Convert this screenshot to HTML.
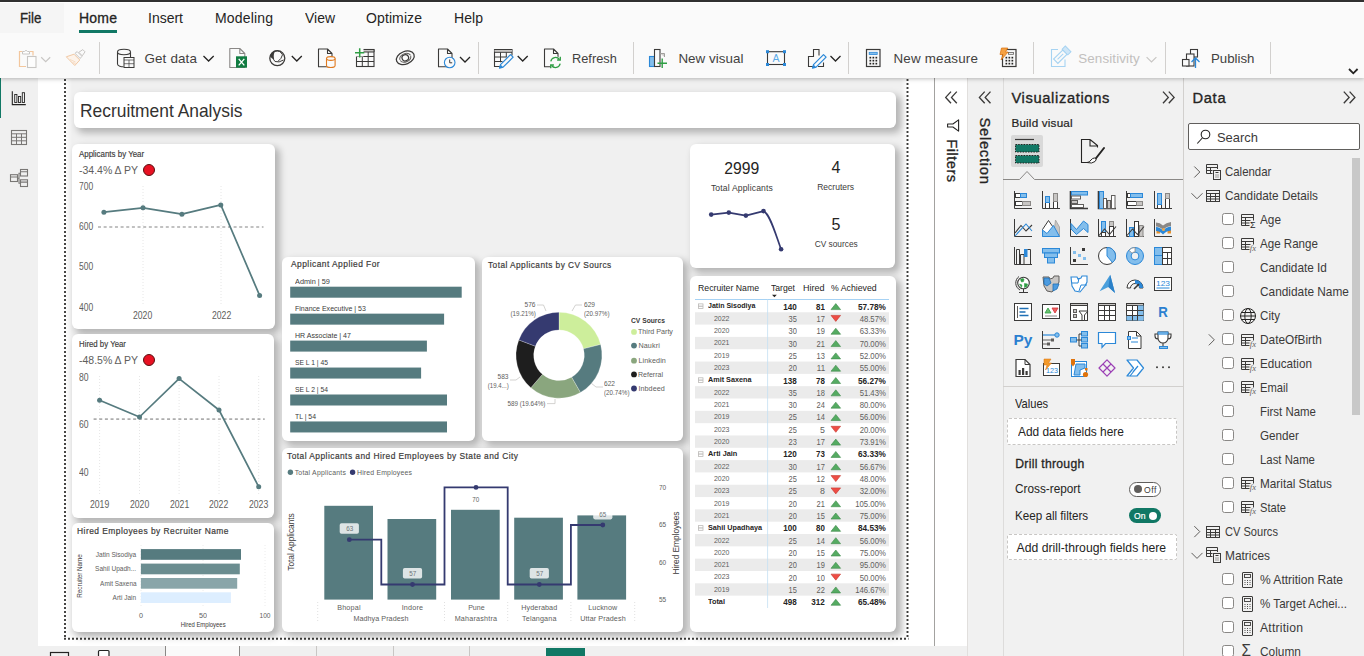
<!DOCTYPE html>
<html lang="en"><head><meta charset="utf-8"><title>Recruitment Analysis - Power BI Desktop</title>
<style>
*{box-sizing:border-box;margin:0;padding:0}
html,body{width:1364px;height:656px;overflow:hidden;background:#fff}
body{position:relative;font-family:"Liberation Sans",sans-serif;color:#252423}
.b{position:absolute;display:block}
.t{position:absolute;white-space:nowrap;display:block}
.g{position:absolute;left:0;top:0;width:0;height:0}
.card{position:absolute;background:#fff;border-radius:6px;box-shadow:4px 4px 7px 1px rgba(0,0,0,.25)}
svg{overflow:visible}
</style></head>
<body>
<div class="b" style="left:0.00px;top:0.00px;width:1364.00px;height:2.00px;background:#333333;"></div>
<header class="g" id="ribbon">
<div class="b" style="left:0.00px;top:2.00px;width:1364.00px;height:76.00px;background:#fafafa;box-shadow:0 1px 4px rgba(0,0,0,.25);z-index:5;border-top:1px solid #fff"></div>
<nav class="g" style="z-index:6">
<div class="b" style="left:0.00px;top:3.00px;width:64.00px;height:30.00px;background:#f5f5f5;"></div>
<span class="t" style="left:20.40px;top:10.00px;font-size:14.00px;line-height:17px;color:#252423;transform:scaleX(0.9486);transform-origin:0 50%;-webkit-text-stroke:0.30px #252423;">File</span>
<span class="t" style="left:79.00px;top:10.00px;font-size:14.00px;line-height:17px;color:#252423;letter-spacing:0.218px;-webkit-text-stroke:0.30px #252423;">Home</span>
<span class="t" style="left:148.00px;top:10.00px;font-size:14.00px;line-height:17px;color:#252423;transform:scaleX(0.9996);transform-origin:0 50%;">Insert</span>
<span class="t" style="left:215.00px;top:10.00px;font-size:14.00px;line-height:17px;color:#252423;letter-spacing:0.169px;">Modeling</span>
<span class="t" style="left:305.00px;top:10.00px;font-size:14.00px;line-height:17px;color:#252423;transform:scaleX(0.9969);transform-origin:0 50%;">View</span>
<span class="t" style="left:366.00px;top:10.00px;font-size:14.00px;line-height:17px;color:#252423;letter-spacing:0.109px;">Optimize</span>
<span class="t" style="left:454.00px;top:10.00px;font-size:14.00px;line-height:17px;color:#252423;letter-spacing:0.069px;">Help</span>
<div class="b" style="left:79.00px;top:30.00px;width:38.00px;height:3.00px;background:#117865;"></div>
</nav>
<div class="g" id="ribbon-items" style="z-index:6">
<div class="b" style="left:99.00px;top:42.00px;width:1.00px;height:32.00px;background:#d2d0ce;"></div>
<div class="b" style="left:478.00px;top:42.00px;width:1.00px;height:32.00px;background:#d2d0ce;"></div>
<div class="b" style="left:632.50px;top:42.00px;width:1.00px;height:32.00px;background:#d2d0ce;"></div>
<div class="b" style="left:848.00px;top:42.00px;width:1.00px;height:32.00px;background:#d2d0ce;"></div>
<div class="b" style="left:1033.00px;top:42.00px;width:1.00px;height:32.00px;background:#d2d0ce;"></div>
<div class="b" style="left:1165.00px;top:42.00px;width:1.00px;height:32.00px;background:#d2d0ce;"></div>
<div class="b" style="left:1270.00px;top:42.00px;width:1.00px;height:32.00px;background:#d2d0ce;"></div>
<span class="t" style="left:144.40px;top:51.00px;font-size:13.40px;line-height:16px;color:#424140;letter-spacing:0.171px;">Get data</span>
<span class="t" style="left:571.70px;top:51.00px;font-size:13.40px;line-height:16px;color:#424140;transform:scaleX(0.9548);transform-origin:0 50%;">Refresh</span>
<span class="t" style="left:678.40px;top:51.00px;font-size:13.40px;line-height:16px;color:#424140;letter-spacing:0.034px;">New visual</span>
<span class="t" style="left:893.50px;top:51.00px;font-size:13.40px;line-height:16px;color:#424140;letter-spacing:0.183px;">New measure</span>
<span class="t" style="left:1078.20px;top:51.00px;font-size:13.40px;line-height:16px;color:#c2c0be;letter-spacing:0.128px;">Sensitivity</span>
<span class="t" style="left:1210.60px;top:51.00px;font-size:13.40px;line-height:16px;color:#424140;transform:scaleX(0.9897);transform-origin:0 50%;">Publish</span>
<svg class="b" style="left:0.00px;top:0.00px;" width="1364" height="656" viewBox="0 0 1364 656"><path d="M26 66.500h-6.500v-15h3M30 51.500h3v4" fill="none" stroke="#f3c79d" stroke-width="1.200"/><path d="M22.500 54v-2.500h2q1.500-2.500 3 0h2V54z" fill="#fff" stroke="#c8c6c4" stroke-width="1"/><rect x="27.500" y="56.500" width="8.500" height="11" fill="#fdfdfd" stroke="#c8c6c4" stroke-width="1.100"/><path d="M41.2 57.25l4.5 4.5l4.5 -4.5" fill="none" stroke="#c8c6c4" stroke-width="1.2"/><path d="M66.300 56.800l7.700-2.600 5.800 5.800-5 5.500z" fill="#fdf3ea" stroke="#f1c9a5" stroke-width="1" stroke-linejoin="round"/><path d="M70 59.500l5.500 2.500M72.500 62.500l3 1" stroke="#f6dcc4" stroke-width="1"/><path d="M75 53.300l2.200-1.700 4.700 4.700-1.700 2.200z" fill="#fafafa" stroke="#c8c6c4" stroke-width="1" stroke-linejoin="round"/><path d="M78.800 52.300l4-2.700 2.200 2.200-2.700 4z" fill="#fafafa" stroke="#c8c6c4" stroke-width="1" stroke-linejoin="round"/><path d="M117.500 52v12c0 2 4 2.800 6 2.800M130.500 52v5" fill="none" stroke="#3b3a39" stroke-width="1.100"/><ellipse cx="124" cy="52" rx="6.500" ry="2.700" fill="#fafafa" stroke="#3b3a39" stroke-width="1.100"/><rect x="124" y="57.500" width="10" height="10" fill="#fafafa" stroke="#3b3a39" stroke-width="1"/><path d="M124 60h10M124 63.700h10M129 60v7.500" stroke="#3b3a39" stroke-width="0.700" fill="none"/><path d="M203.5 55.95l5.1 5.1l5.1 -5.1" fill="none" stroke="#252423" stroke-width="1.3"/><path d="M229.8 48.5h10l5 5v14h-15z M239.8 48.5v5h5" fill="none" stroke="#8a8886" stroke-width="1.1" stroke-linejoin="round"/><rect x="236" y="56.300" width="11" height="11.400" fill="#107c41"/><path d="M238.700 58.800l5.600 6.600M244.300 58.800l-5.600 6.600" stroke="#fff" stroke-width="1.300"/><circle cx="277.300" cy="58.200" r="7.500" fill="#fafafa" stroke="#3b3a39" stroke-width="1.300"/><path d="M273.500 52q-2.500 5 1.500 9.500 4 1.500 8.500-1.500M275 51.300q5-1.500 7.500 3.500-1 4-4.500 6.500" fill="none" stroke="#3b3a39" stroke-width="1"/><path d="M270.200 56q1-4.500 5.500-5.500-3 4-1.500 9-3-.5-4-3.500z" fill="#3b3a39"/><path d="M291.8 56l5 5l5 -5" fill="none" stroke="#252423" stroke-width="1.3"/><path d="M318.5 49h9l4.5 4.5v13.3h-13.5z M327.5 49v4.5h4.5" fill="none" stroke="#3b3a39" stroke-width="1.1" stroke-linejoin="round"/><path d="M326.500 58.500v7c0 1.200 2 2 4.300 2s4.300-.8 4.300-2v-7" fill="#fafafa" stroke="#e07a1f" stroke-width="1.100"/><ellipse cx="330.800" cy="58.500" rx="4.300" ry="1.900" fill="#fafafa" stroke="#e07a1f" stroke-width="1.100"/><rect x="356.500" y="49.500" width="17.500" height="17" fill="none" stroke="#3b3a39" stroke-width="1.100"/><path d="M362 49.500h12v2.500h-12z" fill="#c8c6c4" stroke="#3b3a39" stroke-width="1"/><path d="M356.500 56.500h17.500M356.500 61.500h17.500M362.300 52v14.500M368.200 52v14.500" stroke="#3b3a39" stroke-width="1"/><rect x="354.500" y="47.500" width="9" height="9" fill="#fafafa"/><path d="M355 52.800h9.300M359.700 48.200v9.300" stroke="#2f9e44" stroke-width="1.500"/><g fill="none" stroke="#3b3a39" stroke-width="1.250" transform="rotate(-22 405.300 57.800)"><ellipse cx="405.300" cy="57.800" rx="9.300" ry="6.300"/><ellipse cx="405.300" cy="57.800" rx="3.300" ry="3.100"/><path d="M399.500 57.800a5.900 4.600 0 0 1 11.600 -.600" stroke="#605e5c" stroke-width="1"/><path d="M411.100 57.800a5.900 4.600 0 0 1 -11.600 .600" stroke="#605e5c" stroke-width="1"/></g><path d="M438.5 49h9l4.5 4.5v13.3h-13.5z M447.5 49v4.5h4.5" fill="none" stroke="#3b3a39" stroke-width="1.1" stroke-linejoin="round"/><circle cx="449.700" cy="62.500" r="5.300" fill="#fafafa" stroke="#2b88d8" stroke-width="1.100"/><path d="M449.700 59.500v3.300h2.500" fill="none" stroke="#3b3a39" stroke-width="1"/><path d="M460 57l5 5l5 -5" fill="none" stroke="#252423" stroke-width="1.3"/><path d="M502 66.500h-7.500v-17h17.500v6" fill="none" stroke="#3b3a39" stroke-width="1.100"/><path d="M494.500 50.800h17.500" stroke="#c8c6c4" stroke-width="2"/><path d="M494.500 49.500h17.500M494.500 52.300h17.500M494.500 57h12M494.500 61.500h8M500.500 52.300v10M506.300 52.300v5" stroke="#3b3a39" stroke-width="1" fill="none"/><path d="M510.500 54.600l2.600 2.600-10 10-3.600 1 1-3.600z" fill="#fafafa" stroke="#2b88d8" stroke-width="1.200" stroke-linejoin="round"/><path d="M499.500 68.200l1-3.600 2.600 2.600z" fill="#2b88d8"/><path d="M517.7 56l5 5l5 -5" fill="none" stroke="#252423" stroke-width="1.3"/><path d="M544.5 49h9l4.5 4.5v13.3h-13.5z M553.5 49v4.5h4.5" fill="none" stroke="#3b3a39" stroke-width="1.1" stroke-linejoin="round"/><circle cx="555.500" cy="62.500" r="6.300" fill="#fafafa"/><path d="M550.800 61.300a4.800 4.800 0 0 1 8.600-1.800M560.200 63.700a4.800 4.800 0 0 1-8.600 1.800" fill="none" stroke="#2f9e44" stroke-width="1.300"/><path d="M560.300 56.800v3.200h-3.200M550.700 68.200v-3.200h3.200" fill="none" stroke="#2f9e44" stroke-width="1.300"/><rect x="649.500" y="56.500" width="5" height="10" fill="#83beec" stroke="#2b88d8" stroke-width="1.100"/><rect x="654.500" y="49.500" width="5.500" height="17" fill="#fafafa" stroke="#3b3a39" stroke-width="1.100"/><path d="M660 53.500h4.500v3.500" fill="#d2d0ce" stroke="#a19f9d" stroke-width="1"/><path d="M657.500 63.200h9.500M662.200 58.500v9.500" stroke="#2f9e44" stroke-width="1.400"/><rect x="767.500" y="51.700" width="17" height="12.800" fill="none" stroke="#3b3a39" stroke-width="1.100"/><rect x="766" y="50.2" width="3" height="3" fill="#2b88d8"/><rect x="783" y="50.2" width="3" height="3" fill="#2b88d8"/><rect x="766" y="63" width="3" height="3" fill="#2b88d8"/><rect x="783" y="63" width="3" height="3" fill="#2b88d8"/><text x="776" y="62" font-size="10.500" font-family="Liberation Sans,sans-serif" fill="#5aaae8" text-anchor="middle">A</text><path d="M813.500 66.500h-5v-10h5v-7h5.500v6M818 66.500h5.500v-4" fill="none" stroke="#3b3a39" stroke-width="1.100"/><path d="M823.500 54.600l2.600 2.600-10 10-3.600 1 1-3.600z" fill="#fafafa" stroke="#2b88d8" stroke-width="1.200" stroke-linejoin="round"/><path d="M812.500 68.200l1-3.600 2.600 2.600z" fill="#2b88d8"/><path d="M830.5 56l5 5l5 -5" fill="none" stroke="#252423" stroke-width="1.3"/><rect x="866.5" y="49.5" width="13.500" height="17" fill="#fafafa" stroke="#3b3a39" stroke-width="1.200"/><rect x="869.2" y="52.3" width="8" height="2.200" fill="#83beec" stroke="#2b88d8" stroke-width=".800"/><rect x="869.5" y="56.8" width="1.700" height="1.700" fill="#252423"/><rect x="872.5" y="56.8" width="1.700" height="1.700" fill="#252423"/><rect x="875.5" y="56.8" width="1.700" height="1.700" fill="#252423"/><rect x="869.5" y="59.8" width="1.700" height="1.700" fill="#252423"/><rect x="872.5" y="59.8" width="1.700" height="1.700" fill="#252423"/><rect x="875.5" y="59.8" width="1.700" height="1.700" fill="#252423"/><rect x="869.5" y="62.8" width="1.700" height="1.700" fill="#252423"/><rect x="872.5" y="62.8" width="1.700" height="1.700" fill="#252423"/><rect x="875.5" y="62.8" width="1.700" height="1.700" fill="#252423"/><rect x="1002.5" y="49.5" width="13.500" height="17" fill="#fafafa" stroke="#3b3a39" stroke-width="1.200"/><rect x="1008.5" y="52.5" width="5" height="1.800" fill="none" stroke="#605e5c" stroke-width=".800"/><rect x="1005.5" y="56.8" width="1.700" height="1.700" fill="#252423"/><rect x="1008.5" y="56.8" width="1.700" height="1.700" fill="#252423"/><rect x="1011.5" y="56.8" width="1.700" height="1.700" fill="#252423"/><rect x="1005.5" y="59.8" width="1.700" height="1.700" fill="#252423"/><rect x="1008.5" y="59.8" width="1.700" height="1.700" fill="#252423"/><rect x="1011.5" y="59.8" width="1.700" height="1.700" fill="#252423"/><rect x="1005.5" y="62.8" width="1.700" height="1.700" fill="#252423"/><rect x="1008.5" y="62.8" width="1.700" height="1.700" fill="#252423"/><rect x="1011.5" y="62.8" width="1.700" height="1.700" fill="#252423"/><path d="M1001.500 48h6.300l-2.300 4h2.700l-7.200 8 2-5.500h-3z" fill="#f5a142" stroke="#d86f0a" stroke-width=".700" stroke-linejoin="round"/><path d="M1058 49.500h-6.500v17h13.500v-7" fill="none" stroke="#a6d3f2" stroke-width="1.100"/><g transform="rotate(45 1060 57)"><rect x="1057" y="50" width="6" height="13" fill="#fafafa" stroke="#a6d3f2" stroke-width="1.100"/><rect x="1056" y="45.500" width="8" height="4.500" fill="#cfe6f7" stroke="#a6d3f2" stroke-width="1"/><path d="M1060 52.500v8" stroke="#a6d3f2" stroke-width="1"/></g><path d="M1146.6 57.05l4.9 4.9l4.9 -4.9" fill="none" stroke="#c8c6c4" stroke-width="1.2"/><rect x="1190.500" y="49.500" width="7" height="7.500" fill="#fafafa" stroke="#3b3a39" stroke-width="1.100"/><rect x="1186.500" y="54" width="7.500" height="12" fill="#fafafa" stroke="#3b3a39" stroke-width="1.100"/><rect x="1182.500" y="59.500" width="6.500" height="6.500" fill="#fafafa" stroke="#3b3a39" stroke-width="1.100"/><path d="M1195.500 68v-9.500M1191.500 62l4-4 4 4" fill="none" stroke="#2b88d8" stroke-width="1.300"/><path d="M1349 69l4.300 4.300 4.300-4.300" fill="none" stroke="#252423" stroke-width="1.800"/></svg>
</div>
</header>
<aside class="g" id="leftnav">
<div class="b" style="left:0.00px;top:78.00px;width:38.00px;height:578.00px;background:#f0f0f0;"></div>
<div class="b" style="left:0.00px;top:78.00px;width:1.40px;height:40.00px;background:#117865;"></div>
<svg class="b" style="left:0.00px;top:0.00px;" width="1364" height="656" viewBox="0 0 1364 656"><path d="M12.300 91.300v13.300h13.500" fill="none" stroke="#252423" stroke-width="1.100"/><g fill="#f0f0f0" stroke="#252423" stroke-width="0.900"><rect x="14.700" y="94.500" width="2.200" height="8"/><rect x="18.500" y="96.500" width="2.200" height="6"/><rect x="22.300" y="92.700" width="2.200" height="9.800"/></g><rect x="11.500" y="130.500" width="15" height="14" fill="none" stroke="#797775" stroke-width="1.100"/><path d="M11.500 133.800h15M11.500 137.300h15M11.500 140.800h15M16.500 133.800v10.700M21.500 133.800v10.700" stroke="#797775" stroke-width="1"/><g fill="none" stroke="#797775" stroke-width="1.100"><rect x="20.500" y="169.500" width="7" height="6.500"/><rect x="10.500" y="174.700" width="7" height="6.800"/><rect x="20.500" y="179.800" width="7" height="6.700"/><path d="M10.500 177h7M20.500 171.800h7M20.500 182.100h7M17.500 178.200h1.500v-5h1.500M19 178.200v5h1.500"/></g></svg>
</aside>
<footer class="g" id="pagetabs">
<div class="b" style="left:38.00px;top:646.00px;width:929.00px;height:10.00px;background:#f0f0f0;"></div>
<div class="b" style="left:165.00px;top:646.00px;width:1.00px;height:10.00px;background:#8a8886;"></div>
<div class="b" style="left:166.00px;top:646.00px;width:73.00px;height:10.00px;background:#fafafa;"></div>
<div class="b" style="left:239.00px;top:646.00px;width:1.00px;height:10.00px;background:#8a8886;"></div>
<div class="b" style="left:316.00px;top:646.00px;width:1.00px;height:10.00px;background:#c8c6c4;"></div>
<div class="b" style="left:392.50px;top:646.00px;width:1.00px;height:10.00px;background:#c8c6c4;"></div>
<div class="b" style="left:469.00px;top:646.00px;width:1.00px;height:10.00px;background:#c8c6c4;"></div>
<div class="b" style="left:546.00px;top:648.00px;width:39.00px;height:8.00px;background:#117865;"></div>
<svg class="b" style="left:0.00px;top:0.00px;" width="1364" height="656" viewBox="0 0 1364 656"><rect x="50.500" y="652.500" width="18" height="6" fill="none" stroke="#252423" stroke-width="1.200"/><rect x="98.500" y="650.500" width="10.500" height="8" rx="1" fill="#fff" stroke="#252423" stroke-width="1.200"/></svg>
</footer>
<main class="g" id="canvas">
<div class="b" style="left:66.00px;top:60.00px;width:841.00px;height:578.00px;background:#f0f0f0;box-shadow:inset 0 0 4px 3px rgba(255,255,255,.85)"></div>
<svg class="b" style="left:0.00px;top:0.00px;pointer-events:none" width="1364" height="656" viewBox="0 0 1364 656"><g stroke="#3d3c3b" stroke-width="1.9" stroke-dasharray="2 2" fill="none"><line x1="65" y1="79" x2="65" y2="639"/><line x1="907.5" y1="79" x2="907.5" y2="639"/><line x1="64" y1="638.8" x2="908.5" y2="638.8"/></g></svg>
<section id="title" class="g"><div class="card" style="left:74px;top:92px;width:822px;height:36px"></div><span class="t" style="left:80.20px;top:100.00px;font-size:18.60px;line-height:22px;color:#333231;transform:scaleX(0.9357);transform-origin:0 50%;">Recruitment Analysis</span></section>
<section id="applicants-by-year" class="g"><div class="card" style="left:72px;top:144px;width:203.2px;height:184.7px"></div><svg class="b" style="left:0.00px;top:0.00px;" width="1364" height="656" viewBox="0 0 1364 656"><line x1="143" y1="186" x2="143" y2="305" stroke="#e6e6e6" stroke-width="1" stroke-dasharray="1 2"/><line x1="221" y1="186" x2="221" y2="305" stroke="#e6e6e6" stroke-width="1" stroke-dasharray="1 2"/><line x1="98" y1="227" x2="263.5" y2="227" stroke="#adadad" stroke-width="1.7" stroke-dasharray="3 2.65"/><polyline fill="none" stroke="#567b7f" stroke-width="1.7" stroke-linejoin="round" points="103.9,212.2 143,207.8 181.9,214.2 220.8,204.9 259.6,295.4"/><circle cx="103.9" cy="212.2" r="2.5" fill="#567b7f"/><circle cx="143" cy="207.8" r="2.5" fill="#567b7f"/><circle cx="181.9" cy="214.2" r="2.5" fill="#567b7f"/><circle cx="220.8" cy="204.9" r="2.5" fill="#567b7f"/><circle cx="259.6" cy="295.4" r="2.5" fill="#567b7f"/></svg><span class="t" style="left:79.00px;top:149.00px;font-size:8.60px;line-height:10px;color:#3b3a39;transform:scaleX(0.9214);transform-origin:0 50%;-webkit-text-stroke:0.15px #3b3a39;">Applicants by Year</span><span class="t" style="left:79.00px;top:163.00px;font-size:11.60px;line-height:14px;color:#605e5c;transform:scaleX(0.9057);transform-origin:0 50%;">-34.4% Δ PY</span><span class="b" style="left:143px;top:164px;width:12px;height:12px;border-radius:50%;background:#e81123;border:1px solid #5a1010"></span><span class="t" style="left:79.00px;top:181.00px;font-size:10.40px;line-height:12px;color:#605e5c;transform:scaleX(0.8183);transform-origin:0 50%;">700</span><span class="t" style="left:79.00px;top:221.00px;font-size:10.40px;line-height:12px;color:#605e5c;transform:scaleX(0.8183);transform-origin:0 50%;">600</span><span class="t" style="left:79.00px;top:261.00px;font-size:10.40px;line-height:12px;color:#605e5c;transform:scaleX(0.8183);transform-origin:0 50%;">500</span><span class="t" style="left:79.00px;top:302.00px;font-size:10.40px;line-height:12px;color:#605e5c;transform:scaleX(0.8183);transform-origin:0 50%;">400</span><span class="t" style="left:131.43px;top:310.00px;font-size:10.40px;line-height:12px;color:#605e5c;transform:scaleX(0.8342);transform-origin:50% 50%;">2020</span><span class="t" style="left:209.63px;top:310.00px;font-size:10.40px;line-height:12px;color:#605e5c;transform:scaleX(0.8342);transform-origin:50% 50%;">2022</span></section>
<section id="hired-by-year" class="g"><div class="card" style="left:72px;top:333.6px;width:202.2px;height:184.2px"></div><svg class="b" style="left:0.00px;top:0.00px;" width="1364" height="656" viewBox="0 0 1364 656"><line x1="99.6" y1="376" x2="99.6" y2="496" stroke="#e6e6e6" stroke-width="1" stroke-dasharray="1 2"/><line x1="139.5" y1="376" x2="139.5" y2="496" stroke="#e6e6e6" stroke-width="1" stroke-dasharray="1 2"/><line x1="179.1" y1="376" x2="179.1" y2="496" stroke="#e6e6e6" stroke-width="1" stroke-dasharray="1 2"/><line x1="219" y1="376" x2="219" y2="496" stroke="#e6e6e6" stroke-width="1" stroke-dasharray="1 2"/><line x1="258.7" y1="376" x2="258.7" y2="496" stroke="#e6e6e6" stroke-width="1" stroke-dasharray="1 2"/><line x1="93.6" y1="419.2" x2="264.7" y2="419.2" stroke="#adadad" stroke-width="1.7" stroke-dasharray="3 2.65"/><polyline fill="none" stroke="#567b7f" stroke-width="1.7" stroke-linejoin="round" points="99.6,400.3 139.5,417 179.1,378.6 219,410 258.7,486.8"/><circle cx="99.6" cy="400.3" r="2.5" fill="#567b7f"/><circle cx="139.5" cy="417" r="2.5" fill="#567b7f"/><circle cx="179.1" cy="378.6" r="2.5" fill="#567b7f"/><circle cx="219" cy="410" r="2.5" fill="#567b7f"/><circle cx="258.7" cy="486.8" r="2.5" fill="#567b7f"/></svg><span class="t" style="left:79.00px;top:339.00px;font-size:8.60px;line-height:10px;color:#3b3a39;transform:scaleX(0.9102);transform-origin:0 50%;-webkit-text-stroke:0.15px #3b3a39;">Hired by Year</span><span class="t" style="left:79.00px;top:353.00px;font-size:11.60px;line-height:14px;color:#605e5c;transform:scaleX(0.9057);transform-origin:0 50%;">-48.5% Δ PY</span><span class="b" style="left:143px;top:354px;width:12px;height:12px;border-radius:50%;background:#e81123;border:1px solid #5a1010"></span><span class="t" style="left:79.00px;top:372.00px;font-size:10.40px;line-height:12px;color:#605e5c;transform:scaleX(0.8298);transform-origin:0 50%;">80</span><span class="t" style="left:79.00px;top:419.00px;font-size:10.40px;line-height:12px;color:#605e5c;transform:scaleX(0.8298);transform-origin:0 50%;">60</span><span class="t" style="left:79.00px;top:467.00px;font-size:10.40px;line-height:12px;color:#605e5c;transform:scaleX(0.8298);transform-origin:0 50%;">40</span><span class="t" style="left:88.03px;top:499.00px;font-size:10.40px;line-height:12px;color:#605e5c;transform:scaleX(0.8342);transform-origin:50% 50%;">2019</span><span class="t" style="left:127.93px;top:499.00px;font-size:10.40px;line-height:12px;color:#605e5c;transform:scaleX(0.8342);transform-origin:50% 50%;">2020</span><span class="t" style="left:167.53px;top:499.00px;font-size:10.40px;line-height:12px;color:#605e5c;transform:scaleX(0.8342);transform-origin:50% 50%;">2021</span><span class="t" style="left:207.43px;top:499.00px;font-size:10.40px;line-height:12px;color:#605e5c;transform:scaleX(0.8342);transform-origin:50% 50%;">2022</span><span class="t" style="left:247.13px;top:499.00px;font-size:10.40px;line-height:12px;color:#605e5c;transform:scaleX(0.8342);transform-origin:50% 50%;">2023</span></section>
<section id="hired-by-recruiter" class="g"><div class="card" style="left:72px;top:523px;width:202px;height:109px"></div><svg class="b" style="left:0.00px;top:0.00px;" width="1364" height="656" viewBox="0 0 1364 656"><line x1="141" y1="545" x2="141" y2="608" stroke="#ececec" stroke-width="1" stroke-dasharray="1 2"/><line x1="203" y1="545" x2="203" y2="608" stroke="#ececec" stroke-width="1" stroke-dasharray="1 2"/><line x1="265" y1="545" x2="265" y2="608" stroke="#ececec" stroke-width="1" stroke-dasharray="1 2"/><rect x="140.9" y="549.1" width="100.1" height="10.7" fill="#567b7f"/><rect x="140.9" y="563.6" width="98.9" height="10.7" fill="#6b8d90"/><rect x="140.9" y="578" width="96.3" height="10.7" fill="#89a5a9"/><rect x="140.9" y="592.3" width="90" height="10.7" fill="#ddeeff"/></svg><span class="t" style="left:89.92px;top:550.00px;font-size:7.50px;line-height:9px;color:#605e5c;transform:scaleX(0.8752);transform-origin:100% 50%;">Jatin Sisodiya</span><span class="t" style="left:89.09px;top:564.00px;font-size:7.50px;line-height:9px;color:#605e5c;transform:scaleX(0.8702);transform-origin:100% 50%;">Sahil Upadh...</span><span class="t" style="left:93.68px;top:579.00px;font-size:7.50px;line-height:9px;color:#605e5c;transform:scaleX(0.8560);transform-origin:100% 50%;">Amit Saxena</span><span class="t" style="left:109.11px;top:593.00px;font-size:7.50px;line-height:9px;color:#605e5c;transform:scaleX(0.8674);transform-origin:100% 50%;">Arti Jain</span><span class="t" style="left:77.40px;top:526.00px;font-size:9.10px;line-height:11px;color:#3b3a39;letter-spacing:0.500px;transform:scaleX(0.9262);transform-origin:0 50%;-webkit-text-stroke:0.20px #3b3a39;">Hired Employees by Recruiter Name</span><span class="t" style="left:139.00px;top:611.00px;font-size:7.20px;line-height:9px;color:#605e5c;">0</span><span class="t" style="left:199.10px;top:611.00px;font-size:7.20px;line-height:9px;color:#605e5c;transform:scaleX(0.9989);transform-origin:50% 50%;">50</span><span class="t" style="left:258.99px;top:611.00px;font-size:7.20px;line-height:9px;color:#605e5c;transform:scaleX(0.9157);transform-origin:50% 50%;">100</span><span class="t" style="left:177.57px;top:621.00px;font-size:6.60px;line-height:8px;color:#3b3a39;transform:scaleX(0.8954);transform-origin:50% 50%;">Hired Employees</span><span class="t" style="left:79.8px;top:576px;font-size:6.4px;line-height:8px;color:#3b3a39;transform:translate(-50%,-50%) rotate(-90deg);letter-spacing:-0.1px">Recruiter Name</span></section>
<section id="applied-for" class="g"><div class="card" style="left:282px;top:257px;width:193px;height:184px"></div><svg class="b" style="left:0.00px;top:0.00px;" width="1364" height="656" viewBox="0 0 1364 656"><rect x="290.2" y="286.7" width="171.5" height="11" fill="#567b7f"/><rect x="290.2" y="313.65" width="153.9" height="11" fill="#567b7f"/><rect x="290.2" y="340.6" width="136.7" height="11" fill="#567b7f"/><rect x="290.2" y="367.55" width="130.9" height="11" fill="#567b7f"/><rect x="290.2" y="394.5" width="156.8" height="11" fill="#567b7f"/><rect x="290.2" y="421.45" width="156.8" height="11" fill="#567b7f"/></svg><span class="t" style="left:295.00px;top:277.00px;font-size:7.40px;line-height:9px;color:#3b3a39;transform:scaleX(0.9932);transform-origin:0 50%;">Admin | 59</span><span class="t" style="left:295.00px;top:304.00px;font-size:7.40px;line-height:9px;color:#3b3a39;transform:scaleX(0.9501);transform-origin:0 50%;">Finance Executive | 53</span><span class="t" style="left:295.00px;top:331.00px;font-size:7.40px;line-height:9px;color:#3b3a39;transform:scaleX(0.9543);transform-origin:0 50%;">HR Associate | 47</span><span class="t" style="left:295.00px;top:358.00px;font-size:7.40px;line-height:9px;color:#3b3a39;transform:scaleX(0.9115);transform-origin:0 50%;">SE L 1 | 45</span><span class="t" style="left:295.00px;top:385.00px;font-size:7.40px;line-height:9px;color:#3b3a39;transform:scaleX(0.9115);transform-origin:0 50%;">SE L 2 | 54</span><span class="t" style="left:295.00px;top:412.00px;font-size:7.40px;line-height:9px;color:#3b3a39;transform:scaleX(0.9281);transform-origin:0 50%;">TL | 54</span><span class="t" style="left:290.80px;top:259.00px;font-size:9.10px;line-height:11px;color:#3b3a39;letter-spacing:0.500px;transform:scaleX(0.9240);transform-origin:0 50%;-webkit-text-stroke:0.20px #3b3a39;">Applicant Applied For</span></section>
<section id="cv-sources" class="g"><div class="card" style="left:482px;top:257px;width:201px;height:184px"></div><svg class="b" style="left:0.00px;top:0.00px;" width="1364" height="656" viewBox="0 0 1364 656"><path d="M559.00 312.20A43 43 0 0 1 600.63 344.43L583.49 348.86A25.3 25.3 0 0 0 559.00 329.90Z" fill="#cdee9b" stroke="#fff" stroke-width="0.25"/><path d="M600.63 344.43A43 43 0 0 1 580.40 392.50L571.59 377.14A25.3 25.3 0 0 0 583.49 348.86Z" fill="#567b7f" stroke="#fff" stroke-width="0.25"/><path d="M580.40 392.50A43 43 0 0 1 530.87 387.72L542.45 374.33A25.3 25.3 0 0 0 571.59 377.14Z" fill="#8aa67e" stroke="#fff" stroke-width="0.25"/><path d="M530.87 387.72A43 43 0 0 1 518.81 339.90L535.36 346.20A25.3 25.3 0 0 0 542.45 374.33Z" fill="#1e1e1e" stroke="#fff" stroke-width="0.25"/><path d="M518.81 339.90A43 43 0 0 1 559.00 312.20L559.00 329.90A25.3 25.3 0 0 0 535.36 346.20Z" fill="#353a70" stroke="#fff" stroke-width="0.25"/><g fill="none" stroke="#c8c6c4" stroke-width="0.8"><polyline points="572,311 575.5,305 582,305"/><polyline points="546,311 543.5,305 537,305"/><polyline points="591,383 596,387 603,387"/><polyline points="520,377 516,380 510,380"/><polyline points="555,399 555,403.6 547,403.6"/></g><circle cx="634" cy="331.9" r="2.9" fill="#cdee9b"/><circle cx="634" cy="345.6" r="2.9" fill="#567b7f"/><circle cx="634" cy="360.7" r="2.9" fill="#8aa67e"/><circle cx="634" cy="374.4" r="2.9" fill="#1e1e1e"/><circle cx="634" cy="388.5" r="2.9" fill="#353a70"/></svg><span class="t" style="left:487.70px;top:260.00px;font-size:9.10px;line-height:11px;color:#3b3a39;letter-spacing:0.500px;transform:scaleX(0.9107);transform-origin:0 50%;-webkit-text-stroke:0.20px #3b3a39;">Total Applicants by CV Sourcs</span><span class="t" style="left:583.70px;top:301.00px;font-size:6.90px;line-height:8px;color:#605e5c;transform:scaleX(0.9555);transform-origin:0 50%;">629</span><span class="t" style="left:583.70px;top:310.00px;font-size:6.90px;line-height:8px;color:#605e5c;transform:scaleX(0.9108);transform-origin:0 50%;">(20.97%)</span><span class="t" style="left:524.19px;top:301.00px;font-size:6.90px;line-height:8px;color:#605e5c;transform:scaleX(0.9555);transform-origin:100% 50%;">576</span><span class="t" style="left:507.70px;top:310.00px;font-size:6.90px;line-height:8px;color:#605e5c;transform:scaleX(0.9108);transform-origin:100% 50%;">(19.21%)</span><span class="t" style="left:604.30px;top:380.00px;font-size:6.90px;line-height:8px;color:#605e5c;transform:scaleX(0.9555);transform-origin:0 50%;">622</span><span class="t" style="left:604.30px;top:389.00px;font-size:6.90px;line-height:8px;color:#605e5c;transform:scaleX(0.9108);transform-origin:0 50%;">(20.74%)</span><span class="t" style="left:497.49px;top:373.00px;font-size:6.90px;line-height:8px;color:#605e5c;transform:scaleX(0.9555);transform-origin:100% 50%;">583</span><span class="t" style="left:485.22px;top:382.00px;font-size:6.90px;line-height:8px;color:#605e5c;transform:scaleX(0.8832);transform-origin:100% 50%;">(19.4...)</span><span class="t" style="left:503.87px;top:400.00px;font-size:6.90px;line-height:8px;color:#605e5c;transform:scaleX(0.9173);transform-origin:100% 50%;">589 (19.64%)</span><span class="t" style="left:631.00px;top:316.00px;font-size:7.20px;line-height:9px;color:#3b3a39;font-weight:700;transform:scaleX(0.9338);transform-origin:0 50%;">CV Sourcs</span><span class="t" style="left:638.40px;top:327.00px;font-size:7.20px;line-height:9px;color:#605e5c;transform:scaleX(0.9940);transform-origin:0 50%;">Third Party</span><span class="t" style="left:638.40px;top:341.00px;font-size:7.20px;line-height:9px;color:#605e5c;letter-spacing:0.139px;">Naukri</span><span class="t" style="left:638.40px;top:356.00px;font-size:7.20px;line-height:9px;color:#605e5c;letter-spacing:0.097px;">Linkedin</span><span class="t" style="left:638.40px;top:370.00px;font-size:7.20px;line-height:9px;color:#605e5c;transform:scaleX(0.9762);transform-origin:0 50%;">Referral</span><span class="t" style="left:638.40px;top:384.00px;font-size:7.20px;line-height:9px;color:#605e5c;letter-spacing:0.079px;">Inbdeed</span></section>
<section id="state-city" class="g"><div class="card" style="left:282px;top:448px;width:401px;height:184px"></div><svg class="b" style="left:0.00px;top:0.00px;" width="1364" height="656" viewBox="0 0 1364 656"><rect x="324.3" y="505.8" width="48.7" height="93.8" fill="#567b7f"/><rect x="387.5" y="519" width="48.7" height="80.6" fill="#567b7f"/><rect x="451" y="509.8" width="48.7" height="89.8" fill="#567b7f"/><rect x="514.2" y="517.7" width="48.7" height="81.9" fill="#567b7f"/><rect x="577.4" y="515.4" width="48.7" height="84.2" fill="#567b7f"/><line x1="317.7" y1="602" x2="317.7" y2="623" stroke="#e0e0e0" stroke-width="1" stroke-dasharray="1 2"/><line x1="444.5" y1="602" x2="444.5" y2="623" stroke="#e0e0e0" stroke-width="1" stroke-dasharray="1 2"/><line x1="507.7" y1="602" x2="507.7" y2="623" stroke="#e0e0e0" stroke-width="1" stroke-dasharray="1 2"/><line x1="570.9" y1="602" x2="570.9" y2="623" stroke="#e0e0e0" stroke-width="1" stroke-dasharray="1 2"/><line x1="634.7" y1="602" x2="634.7" y2="623" stroke="#e0e0e0" stroke-width="1" stroke-dasharray="1 2"/><polyline fill="none" stroke="#353a70" stroke-width="1.8" points="349.3,539.7 381.3,539.7 381.3,584.5 444.5,584.5 444.5,487.4 507.7,487.4 507.7,584.5 570.9,584.5 570.9,525 602.8,525"/><circle cx="349.3" cy="539.7" r="2.4" fill="#353a70"/><circle cx="412.5" cy="584.5" r="2.4" fill="#353a70"/><circle cx="476" cy="487.4" r="2.4" fill="#353a70"/><circle cx="539.3" cy="584.5" r="2.4" fill="#353a70"/><circle cx="602.8" cy="525" r="2.4" fill="#353a70"/><rect x="339.7" y="523.3" width="19.2" height="10.4" rx="1.8" fill="#fff" fill-opacity="0.8"/><rect x="402.9" y="568.1" width="19.2" height="10.4" rx="1.8" fill="#fff" fill-opacity="0.8"/><rect x="529.7" y="568.1" width="19.2" height="10.4" rx="1.8" fill="#fff" fill-opacity="0.8"/><rect x="593.2" y="509" width="19.2" height="10.4" rx="1.8" fill="#fff" fill-opacity="0.8"/><circle cx="290.4" cy="472.3" r="2.7" fill="#567b7f"/><circle cx="352.6" cy="472.3" r="2.7" fill="#353a70"/></svg><span class="t" style="left:287.40px;top:451.00px;font-size:9.10px;line-height:11px;color:#3b3a39;letter-spacing:0.500px;transform:scaleX(0.9208);transform-origin:0 50%;-webkit-text-stroke:0.20px #3b3a39;">Total Applicants and Hired Employees by State and City</span><span class="t" style="left:294.70px;top:469.00px;font-size:6.90px;line-height:8px;color:#605e5c;letter-spacing:0.224px;">Total Applicants</span><span class="t" style="left:357.00px;top:469.00px;font-size:6.90px;line-height:8px;color:#605e5c;letter-spacing:0.176px;">Hired Employees</span><span class="t" style="left:345.83px;top:525.00px;font-size:6.60px;line-height:8px;color:#6e7477;transform:scaleX(0.9535);transform-origin:50% 50%;">63</span><span class="t" style="left:408.83px;top:570.00px;font-size:6.60px;line-height:8px;color:#6e7477;transform:scaleX(0.9535);transform-origin:50% 50%;">57</span><span class="t" style="left:472.33px;top:496.00px;font-size:6.60px;line-height:8px;color:#605e5c;transform:scaleX(0.9535);transform-origin:50% 50%;">70</span><span class="t" style="left:535.63px;top:570.00px;font-size:6.60px;line-height:8px;color:#6e7477;transform:scaleX(0.9535);transform-origin:50% 50%;">57</span><span class="t" style="left:599.13px;top:511.00px;font-size:6.60px;line-height:8px;color:#6e7477;transform:scaleX(0.9535);transform-origin:50% 50%;">65</span><span class="t" style="left:658.80px;top:484.00px;font-size:6.80px;line-height:8px;color:#605e5c;transform:scaleX(0.9519);transform-origin:0 50%;">70</span><span class="t" style="left:658.80px;top:521.00px;font-size:6.80px;line-height:8px;color:#605e5c;transform:scaleX(0.9519);transform-origin:0 50%;">65</span><span class="t" style="left:658.80px;top:559.00px;font-size:6.80px;line-height:8px;color:#605e5c;transform:scaleX(0.9519);transform-origin:0 50%;">60</span><span class="t" style="left:658.80px;top:596.00px;font-size:6.80px;line-height:8px;color:#605e5c;transform:scaleX(0.9519);transform-origin:0 50%;">55</span><span class="t" style="left:337.14px;top:603.00px;font-size:7.20px;line-height:9px;color:#605e5c;letter-spacing:0.216px;">Bhopal</span><span class="t" style="left:401.64px;top:603.00px;font-size:7.20px;line-height:9px;color:#605e5c;letter-spacing:0.217px;">Indore</span><span class="t" style="left:467.59px;top:603.00px;font-size:7.20px;line-height:9px;color:#605e5c;transform:scaleX(0.9812);transform-origin:50% 50%;">Pune</span><span class="t" style="left:521.25px;top:603.00px;font-size:7.20px;line-height:9px;color:#605e5c;letter-spacing:0.097px;">Hyderabad</span><span class="t" style="left:588.25px;top:603.00px;font-size:7.20px;line-height:9px;color:#605e5c;letter-spacing:0.097px;">Lucknow</span><span class="t" style="left:353.48px;top:614.00px;font-size:7.20px;line-height:9px;color:#605e5c;letter-spacing:0.044px;">Madhya Pradesh</span><span class="t" style="left:454.65px;top:614.00px;font-size:7.20px;line-height:9px;color:#605e5c;letter-spacing:0.208px;">Maharashtra</span><span class="t" style="left:521.97px;top:614.00px;font-size:7.20px;line-height:9px;color:#605e5c;letter-spacing:0.159px;">Telangana</span><span class="t" style="left:580.21px;top:614.00px;font-size:7.20px;line-height:9px;color:#605e5c;letter-spacing:0.090px;">Uttar Pradesh</span><span class="t" style="left:291.4px;top:542.3px;font-size:8.4px;line-height:10px;color:#3b3a39;transform:translate(-50%,-50%) rotate(-90deg);letter-spacing:-0.05px">Total Applicants</span><span class="t" style="left:675.5px;top:542.5px;font-size:8.4px;line-height:10px;color:#3b3a39;transform:translate(-50%,-50%) rotate(-90deg);letter-spacing:-0.05px">Hired Employees</span></section>
<section id="kpi" class="g"><div class="card" style="left:690.3px;top:144.4px;width:204.5px;height:123.2px"></div><svg class="b" style="left:0.00px;top:0.00px;" width="1364" height="656" viewBox="0 0 1364 656"><path d="M711.2 214.6L728.8 212.6L745.9 215.6L763.5 211.1C770 213.6 776 235.6 781.1 249.2" fill="none" stroke="#353a70" stroke-width="1.7" stroke-linejoin="round"/><circle cx="711.2" cy="214.6" r="2.3" fill="#353a70"/><circle cx="728.8" cy="212.6" r="2.3" fill="#353a70"/><circle cx="745.9" cy="215.6" r="2.3" fill="#353a70"/><circle cx="763.5" cy="211.1" r="2.3" fill="#353a70"/><circle cx="781.1" cy="249.2" r="2.3" fill="#353a70"/></svg><span class="t" style="left:724.10px;top:159.00px;font-size:16.00px;line-height:19px;color:#252423;transform:scaleX(0.9833);transform-origin:50% 50%;">2999</span><span class="t" style="left:710.93px;top:183.00px;font-size:8.60px;line-height:10px;color:#3b3a39;letter-spacing:0.149px;">Total Applicants</span><span class="t" style="left:831.55px;top:158.00px;font-size:16.00px;line-height:19px;color:#252423;">4</span><span class="t" style="left:817.36px;top:182.00px;font-size:8.60px;line-height:10px;color:#3b3a39;transform:scaleX(0.9926);transform-origin:50% 50%;">Recruters</span><span class="t" style="left:831.55px;top:215.00px;font-size:16.00px;line-height:19px;color:#252423;">5</span><span class="t" style="left:813.78px;top:239.00px;font-size:8.60px;line-height:10px;color:#3b3a39;transform:scaleX(0.9674);transform-origin:50% 50%;">CV sources</span></section>
<section id="recruiter-table" class="g"><div class="card" style="left:690.4px;top:276.4px;width:205.6px;height:355.5px"></div><svg class="b" style="left:0.00px;top:0.00px;" width="1364" height="656" viewBox="0 0 1364 656"><rect x="695" y="312.26" width="194" height="12.32" fill="#ebebeb"/><rect x="695" y="336.90" width="194" height="12.32" fill="#ebebeb"/><rect x="695" y="361.54" width="194" height="12.32" fill="#ebebeb"/><rect x="695" y="386.18" width="194" height="12.32" fill="#ebebeb"/><rect x="695" y="410.82" width="194" height="12.32" fill="#ebebeb"/><rect x="695" y="435.46" width="194" height="12.32" fill="#ebebeb"/><rect x="695" y="460.10" width="194" height="12.32" fill="#ebebeb"/><rect x="695" y="484.74" width="194" height="12.32" fill="#ebebeb"/><rect x="695" y="509.38" width="194" height="12.32" fill="#ebebeb"/><rect x="695" y="534.02" width="194" height="12.32" fill="#ebebeb"/><rect x="695" y="558.66" width="194" height="12.32" fill="#ebebeb"/><rect x="695" y="583.30" width="194" height="12.32" fill="#ebebeb"/><line x1="695" y1="299.5" x2="889" y2="299.5" stroke="#9ccdf3" stroke-width="0.9"/><line x1="767.6" y1="299.5" x2="767.6" y2="608" stroke="#c3def3" stroke-width="0.8"/><path d="M772 294.7h4.8l-2.4 2.500z" fill="#252423"/><path d="M831 309.60L835.8 303.60L840.6 309.60Z" fill="#55ab62" stroke="#3f8a4b" stroke-width="0.6" stroke-linejoin="round"/><rect x="698.4" y="303.90" width="4.6" height="4.6" fill="#fff" stroke="#b3b0ad" stroke-width="0.7"/><line x1="698.6" y1="306.20" x2="702.8" y2="306.20" stroke="#a19f9d" stroke-width="0.8"/><path d="M831 315.42L840.6 315.42L835.8 321.42Z" fill="#ee4d45" stroke="#c4382f" stroke-width="0.6" stroke-linejoin="round"/><path d="M831 334.24L835.8 328.24L840.6 334.24Z" fill="#55ab62" stroke="#3f8a4b" stroke-width="0.6" stroke-linejoin="round"/><path d="M831 346.56L835.8 340.56L840.6 346.56Z" fill="#55ab62" stroke="#3f8a4b" stroke-width="0.6" stroke-linejoin="round"/><path d="M831 358.88L835.8 352.88L840.6 358.88Z" fill="#55ab62" stroke="#3f8a4b" stroke-width="0.6" stroke-linejoin="round"/><path d="M831 371.20L835.8 365.20L840.6 371.20Z" fill="#55ab62" stroke="#3f8a4b" stroke-width="0.6" stroke-linejoin="round"/><path d="M831 383.52L835.8 377.52L840.6 383.52Z" fill="#55ab62" stroke="#3f8a4b" stroke-width="0.6" stroke-linejoin="round"/><rect x="698.4" y="377.82" width="4.6" height="4.6" fill="#fff" stroke="#b3b0ad" stroke-width="0.7"/><line x1="698.6" y1="380.12" x2="702.8" y2="380.12" stroke="#a19f9d" stroke-width="0.8"/><path d="M831 395.84L835.8 389.84L840.6 395.84Z" fill="#55ab62" stroke="#3f8a4b" stroke-width="0.6" stroke-linejoin="round"/><path d="M831 408.16L835.8 402.16L840.6 408.16Z" fill="#55ab62" stroke="#3f8a4b" stroke-width="0.6" stroke-linejoin="round"/><path d="M831 420.48L835.8 414.48L840.6 420.48Z" fill="#55ab62" stroke="#3f8a4b" stroke-width="0.6" stroke-linejoin="round"/><path d="M831 426.30L840.6 426.30L835.8 432.30Z" fill="#ee4d45" stroke="#c4382f" stroke-width="0.6" stroke-linejoin="round"/><path d="M831 445.12L835.8 439.12L840.6 445.12Z" fill="#55ab62" stroke="#3f8a4b" stroke-width="0.6" stroke-linejoin="round"/><path d="M831 457.44L835.8 451.44L840.6 457.44Z" fill="#55ab62" stroke="#3f8a4b" stroke-width="0.6" stroke-linejoin="round"/><rect x="698.4" y="451.74" width="4.6" height="4.6" fill="#fff" stroke="#b3b0ad" stroke-width="0.7"/><line x1="698.6" y1="454.04" x2="702.8" y2="454.04" stroke="#a19f9d" stroke-width="0.8"/><path d="M831 469.76L835.8 463.76L840.6 469.76Z" fill="#55ab62" stroke="#3f8a4b" stroke-width="0.6" stroke-linejoin="round"/><path d="M831 475.58L840.6 475.58L835.8 481.58Z" fill="#ee4d45" stroke="#c4382f" stroke-width="0.6" stroke-linejoin="round"/><path d="M831 487.90L840.6 487.90L835.8 493.90Z" fill="#ee4d45" stroke="#c4382f" stroke-width="0.6" stroke-linejoin="round"/><path d="M831 506.72L835.8 500.72L840.6 506.72Z" fill="#55ab62" stroke="#3f8a4b" stroke-width="0.6" stroke-linejoin="round"/><path d="M831 519.04L835.8 513.04L840.6 519.04Z" fill="#55ab62" stroke="#3f8a4b" stroke-width="0.6" stroke-linejoin="round"/><path d="M831 531.36L835.8 525.36L840.6 531.36Z" fill="#55ab62" stroke="#3f8a4b" stroke-width="0.6" stroke-linejoin="round"/><rect x="698.4" y="525.66" width="4.6" height="4.6" fill="#fff" stroke="#b3b0ad" stroke-width="0.7"/><line x1="698.6" y1="527.96" x2="702.8" y2="527.96" stroke="#a19f9d" stroke-width="0.8"/><path d="M831 543.68L835.8 537.68L840.6 543.68Z" fill="#55ab62" stroke="#3f8a4b" stroke-width="0.6" stroke-linejoin="round"/><path d="M831 556.00L835.8 550.00L840.6 556.00Z" fill="#55ab62" stroke="#3f8a4b" stroke-width="0.6" stroke-linejoin="round"/><path d="M831 568.32L835.8 562.32L840.6 568.32Z" fill="#55ab62" stroke="#3f8a4b" stroke-width="0.6" stroke-linejoin="round"/><path d="M831 574.14L840.6 574.14L835.8 580.14Z" fill="#ee4d45" stroke="#c4382f" stroke-width="0.6" stroke-linejoin="round"/><path d="M831 592.96L835.8 586.96L840.6 592.96Z" fill="#55ab62" stroke="#3f8a4b" stroke-width="0.6" stroke-linejoin="round"/><path d="M831 605.28L835.8 599.28L840.6 605.28Z" fill="#55ab62" stroke="#3f8a4b" stroke-width="0.6" stroke-linejoin="round"/></svg><span class="t" style="left:707.90px;top:301.00px;font-size:7.50px;line-height:9px;color:#252423;font-weight:700;transform:scaleX(0.9398);transform-origin:0 50%;">Jatin Sisodiya</span><span class="t" style="left:782.12px;top:302.00px;font-size:8.80px;line-height:11px;color:#252423;font-weight:700;transform:scaleX(0.9194);transform-origin:100% 50%;">140</span><span class="t" style="left:815.01px;top:302.00px;font-size:8.80px;line-height:11px;color:#252423;font-weight:700;transform:scaleX(0.8990);transform-origin:100% 50%;">81</span><span class="t" style="left:856.15px;top:302.00px;font-size:8.80px;line-height:11px;color:#252423;font-weight:700;transform:scaleX(0.9348);transform-origin:100% 50%;">57.78%</span><span class="t" style="left:713.60px;top:314.00px;font-size:7.60px;line-height:9px;color:#605e5c;transform:scaleX(0.9167);transform-origin:0 50%;">2022</span><span class="t" style="left:787.01px;top:314.00px;font-size:8.80px;line-height:11px;color:#605e5c;transform:scaleX(0.8479);transform-origin:100% 50%;">35</span><span class="t" style="left:815.01px;top:314.00px;font-size:8.80px;line-height:11px;color:#605e5c;transform:scaleX(0.8479);transform-origin:100% 50%;">17</span><span class="t" style="left:856.15px;top:314.00px;font-size:8.80px;line-height:11px;color:#605e5c;transform:scaleX(0.8785);transform-origin:100% 50%;">48.57%</span><span class="t" style="left:713.60px;top:326.00px;font-size:7.60px;line-height:9px;color:#605e5c;transform:scaleX(0.9167);transform-origin:0 50%;">2020</span><span class="t" style="left:787.01px;top:326.00px;font-size:8.80px;line-height:11px;color:#605e5c;transform:scaleX(0.8479);transform-origin:100% 50%;">30</span><span class="t" style="left:815.01px;top:326.00px;font-size:8.80px;line-height:11px;color:#605e5c;transform:scaleX(0.8479);transform-origin:100% 50%;">19</span><span class="t" style="left:856.15px;top:326.00px;font-size:8.80px;line-height:11px;color:#605e5c;transform:scaleX(0.8785);transform-origin:100% 50%;">63.33%</span><span class="t" style="left:713.60px;top:338.00px;font-size:7.60px;line-height:9px;color:#605e5c;transform:scaleX(0.9167);transform-origin:0 50%;">2021</span><span class="t" style="left:787.01px;top:339.00px;font-size:8.80px;line-height:11px;color:#605e5c;transform:scaleX(0.8479);transform-origin:100% 50%;">30</span><span class="t" style="left:815.01px;top:339.00px;font-size:8.80px;line-height:11px;color:#605e5c;transform:scaleX(0.8479);transform-origin:100% 50%;">21</span><span class="t" style="left:856.15px;top:339.00px;font-size:8.80px;line-height:11px;color:#605e5c;transform:scaleX(0.8785);transform-origin:100% 50%;">70.00%</span><span class="t" style="left:713.60px;top:351.00px;font-size:7.60px;line-height:9px;color:#605e5c;transform:scaleX(0.9167);transform-origin:0 50%;">2019</span><span class="t" style="left:787.01px;top:351.00px;font-size:8.80px;line-height:11px;color:#605e5c;transform:scaleX(0.8479);transform-origin:100% 50%;">25</span><span class="t" style="left:815.01px;top:351.00px;font-size:8.80px;line-height:11px;color:#605e5c;transform:scaleX(0.8479);transform-origin:100% 50%;">13</span><span class="t" style="left:856.15px;top:351.00px;font-size:8.80px;line-height:11px;color:#605e5c;transform:scaleX(0.8785);transform-origin:100% 50%;">52.00%</span><span class="t" style="left:713.60px;top:363.00px;font-size:7.60px;line-height:9px;color:#605e5c;transform:scaleX(0.9167);transform-origin:0 50%;">2023</span><span class="t" style="left:787.01px;top:363.00px;font-size:8.80px;line-height:11px;color:#605e5c;transform:scaleX(0.8479);transform-origin:100% 50%;">20</span><span class="t" style="left:815.66px;top:363.00px;font-size:8.80px;line-height:11px;color:#605e5c;transform:scaleX(0.9085);transform-origin:100% 50%;">11</span><span class="t" style="left:856.15px;top:363.00px;font-size:8.80px;line-height:11px;color:#605e5c;transform:scaleX(0.8785);transform-origin:100% 50%;">55.00%</span><span class="t" style="left:707.90px;top:375.00px;font-size:7.50px;line-height:9px;color:#252423;font-weight:700;transform:scaleX(0.9663);transform-origin:0 50%;">Amit Saxena</span><span class="t" style="left:782.12px;top:376.00px;font-size:8.80px;line-height:11px;color:#252423;font-weight:700;transform:scaleX(0.9194);transform-origin:100% 50%;">138</span><span class="t" style="left:815.01px;top:376.00px;font-size:8.80px;line-height:11px;color:#252423;font-weight:700;transform:scaleX(0.8990);transform-origin:100% 50%;">78</span><span class="t" style="left:856.15px;top:376.00px;font-size:8.80px;line-height:11px;color:#252423;font-weight:700;transform:scaleX(0.9348);transform-origin:100% 50%;">56.27%</span><span class="t" style="left:713.60px;top:388.00px;font-size:7.60px;line-height:9px;color:#605e5c;transform:scaleX(0.9167);transform-origin:0 50%;">2022</span><span class="t" style="left:787.01px;top:388.00px;font-size:8.80px;line-height:11px;color:#605e5c;transform:scaleX(0.8479);transform-origin:100% 50%;">35</span><span class="t" style="left:815.01px;top:388.00px;font-size:8.80px;line-height:11px;color:#605e5c;transform:scaleX(0.8479);transform-origin:100% 50%;">18</span><span class="t" style="left:856.15px;top:388.00px;font-size:8.80px;line-height:11px;color:#605e5c;transform:scaleX(0.8785);transform-origin:100% 50%;">51.43%</span><span class="t" style="left:713.60px;top:400.00px;font-size:7.60px;line-height:9px;color:#605e5c;transform:scaleX(0.9167);transform-origin:0 50%;">2021</span><span class="t" style="left:787.01px;top:400.00px;font-size:8.80px;line-height:11px;color:#605e5c;transform:scaleX(0.8479);transform-origin:100% 50%;">30</span><span class="t" style="left:815.01px;top:400.00px;font-size:8.80px;line-height:11px;color:#605e5c;transform:scaleX(0.8479);transform-origin:100% 50%;">24</span><span class="t" style="left:856.15px;top:400.00px;font-size:8.80px;line-height:11px;color:#605e5c;transform:scaleX(0.8785);transform-origin:100% 50%;">80.00%</span><span class="t" style="left:713.60px;top:412.00px;font-size:7.60px;line-height:9px;color:#605e5c;transform:scaleX(0.9167);transform-origin:0 50%;">2019</span><span class="t" style="left:787.01px;top:412.00px;font-size:8.80px;line-height:11px;color:#605e5c;transform:scaleX(0.8479);transform-origin:100% 50%;">25</span><span class="t" style="left:815.01px;top:412.00px;font-size:8.80px;line-height:11px;color:#605e5c;transform:scaleX(0.8479);transform-origin:100% 50%;">14</span><span class="t" style="left:856.15px;top:412.00px;font-size:8.80px;line-height:11px;color:#605e5c;transform:scaleX(0.8785);transform-origin:100% 50%;">56.00%</span><span class="t" style="left:713.60px;top:425.00px;font-size:7.60px;line-height:9px;color:#605e5c;transform:scaleX(0.9167);transform-origin:0 50%;">2023</span><span class="t" style="left:787.01px;top:425.00px;font-size:8.80px;line-height:11px;color:#605e5c;transform:scaleX(0.8479);transform-origin:100% 50%;">25</span><span class="t" style="left:819.91px;top:425.00px;font-size:8.80px;line-height:11px;color:#605e5c;">5</span><span class="t" style="left:856.15px;top:425.00px;font-size:8.80px;line-height:11px;color:#605e5c;transform:scaleX(0.8785);transform-origin:100% 50%;">20.00%</span><span class="t" style="left:713.60px;top:437.00px;font-size:7.60px;line-height:9px;color:#605e5c;transform:scaleX(0.9167);transform-origin:0 50%;">2020</span><span class="t" style="left:787.01px;top:437.00px;font-size:8.80px;line-height:11px;color:#605e5c;transform:scaleX(0.8479);transform-origin:100% 50%;">23</span><span class="t" style="left:815.01px;top:437.00px;font-size:8.80px;line-height:11px;color:#605e5c;transform:scaleX(0.8479);transform-origin:100% 50%;">17</span><span class="t" style="left:856.15px;top:437.00px;font-size:8.80px;line-height:11px;color:#605e5c;transform:scaleX(0.8785);transform-origin:100% 50%;">73.91%</span><span class="t" style="left:707.90px;top:449.00px;font-size:7.50px;line-height:9px;color:#252423;font-weight:700;transform:scaleX(0.9764);transform-origin:0 50%;">Arti Jain</span><span class="t" style="left:782.12px;top:449.00px;font-size:8.80px;line-height:11px;color:#252423;font-weight:700;transform:scaleX(0.9194);transform-origin:100% 50%;">120</span><span class="t" style="left:815.01px;top:449.00px;font-size:8.80px;line-height:11px;color:#252423;font-weight:700;transform:scaleX(0.8990);transform-origin:100% 50%;">73</span><span class="t" style="left:856.15px;top:449.00px;font-size:8.80px;line-height:11px;color:#252423;font-weight:700;transform:scaleX(0.9348);transform-origin:100% 50%;">63.33%</span><span class="t" style="left:713.60px;top:462.00px;font-size:7.60px;line-height:9px;color:#605e5c;transform:scaleX(0.9167);transform-origin:0 50%;">2022</span><span class="t" style="left:787.01px;top:462.00px;font-size:8.80px;line-height:11px;color:#605e5c;transform:scaleX(0.8479);transform-origin:100% 50%;">30</span><span class="t" style="left:815.01px;top:462.00px;font-size:8.80px;line-height:11px;color:#605e5c;transform:scaleX(0.8479);transform-origin:100% 50%;">17</span><span class="t" style="left:856.15px;top:462.00px;font-size:8.80px;line-height:11px;color:#605e5c;transform:scaleX(0.8785);transform-origin:100% 50%;">56.67%</span><span class="t" style="left:713.60px;top:474.00px;font-size:7.60px;line-height:9px;color:#605e5c;transform:scaleX(0.9167);transform-origin:0 50%;">2020</span><span class="t" style="left:787.01px;top:474.00px;font-size:8.80px;line-height:11px;color:#605e5c;transform:scaleX(0.8479);transform-origin:100% 50%;">25</span><span class="t" style="left:815.01px;top:474.00px;font-size:8.80px;line-height:11px;color:#605e5c;transform:scaleX(0.8479);transform-origin:100% 50%;">12</span><span class="t" style="left:856.15px;top:474.00px;font-size:8.80px;line-height:11px;color:#605e5c;transform:scaleX(0.8785);transform-origin:100% 50%;">48.00%</span><span class="t" style="left:713.60px;top:486.00px;font-size:7.60px;line-height:9px;color:#605e5c;transform:scaleX(0.9167);transform-origin:0 50%;">2023</span><span class="t" style="left:787.01px;top:486.00px;font-size:8.80px;line-height:11px;color:#605e5c;transform:scaleX(0.8479);transform-origin:100% 50%;">25</span><span class="t" style="left:819.91px;top:486.00px;font-size:8.80px;line-height:11px;color:#605e5c;">8</span><span class="t" style="left:856.15px;top:486.00px;font-size:8.80px;line-height:11px;color:#605e5c;transform:scaleX(0.8785);transform-origin:100% 50%;">32.00%</span><span class="t" style="left:713.60px;top:499.00px;font-size:7.60px;line-height:9px;color:#605e5c;transform:scaleX(0.9167);transform-origin:0 50%;">2019</span><span class="t" style="left:787.01px;top:499.00px;font-size:8.80px;line-height:11px;color:#605e5c;transform:scaleX(0.8479);transform-origin:100% 50%;">20</span><span class="t" style="left:815.01px;top:499.00px;font-size:8.80px;line-height:11px;color:#605e5c;transform:scaleX(0.8479);transform-origin:100% 50%;">21</span><span class="t" style="left:851.26px;top:499.00px;font-size:8.80px;line-height:11px;color:#605e5c;transform:scaleX(0.8805);transform-origin:100% 50%;">105.00%</span><span class="t" style="left:713.60px;top:511.00px;font-size:7.60px;line-height:9px;color:#605e5c;transform:scaleX(0.9167);transform-origin:0 50%;">2021</span><span class="t" style="left:787.01px;top:511.00px;font-size:8.80px;line-height:11px;color:#605e5c;transform:scaleX(0.8479);transform-origin:100% 50%;">20</span><span class="t" style="left:815.01px;top:511.00px;font-size:8.80px;line-height:11px;color:#605e5c;transform:scaleX(0.8479);transform-origin:100% 50%;">15</span><span class="t" style="left:856.15px;top:511.00px;font-size:8.80px;line-height:11px;color:#605e5c;transform:scaleX(0.8785);transform-origin:100% 50%;">75.00%</span><span class="t" style="left:707.90px;top:523.00px;font-size:7.50px;line-height:9px;color:#252423;font-weight:700;transform:scaleX(0.9668);transform-origin:0 50%;">Sahil Upadhaya</span><span class="t" style="left:782.12px;top:523.00px;font-size:8.80px;line-height:11px;color:#252423;font-weight:700;transform:scaleX(0.9194);transform-origin:100% 50%;">100</span><span class="t" style="left:815.01px;top:523.00px;font-size:8.80px;line-height:11px;color:#252423;font-weight:700;transform:scaleX(0.8990);transform-origin:100% 50%;">80</span><span class="t" style="left:856.15px;top:523.00px;font-size:8.80px;line-height:11px;color:#252423;font-weight:700;transform:scaleX(0.9348);transform-origin:100% 50%;">84.53%</span><span class="t" style="left:713.60px;top:536.00px;font-size:7.60px;line-height:9px;color:#605e5c;transform:scaleX(0.9167);transform-origin:0 50%;">2022</span><span class="t" style="left:787.01px;top:536.00px;font-size:8.80px;line-height:11px;color:#605e5c;transform:scaleX(0.8479);transform-origin:100% 50%;">25</span><span class="t" style="left:815.01px;top:536.00px;font-size:8.80px;line-height:11px;color:#605e5c;transform:scaleX(0.8479);transform-origin:100% 50%;">14</span><span class="t" style="left:856.15px;top:536.00px;font-size:8.80px;line-height:11px;color:#605e5c;transform:scaleX(0.8785);transform-origin:100% 50%;">56.00%</span><span class="t" style="left:713.60px;top:548.00px;font-size:7.60px;line-height:9px;color:#605e5c;transform:scaleX(0.9167);transform-origin:0 50%;">2020</span><span class="t" style="left:787.01px;top:548.00px;font-size:8.80px;line-height:11px;color:#605e5c;transform:scaleX(0.8479);transform-origin:100% 50%;">20</span><span class="t" style="left:815.01px;top:548.00px;font-size:8.80px;line-height:11px;color:#605e5c;transform:scaleX(0.8479);transform-origin:100% 50%;">15</span><span class="t" style="left:856.15px;top:548.00px;font-size:8.80px;line-height:11px;color:#605e5c;transform:scaleX(0.8785);transform-origin:100% 50%;">75.00%</span><span class="t" style="left:713.60px;top:560.00px;font-size:7.60px;line-height:9px;color:#605e5c;transform:scaleX(0.9167);transform-origin:0 50%;">2021</span><span class="t" style="left:787.01px;top:560.00px;font-size:8.80px;line-height:11px;color:#605e5c;transform:scaleX(0.8479);transform-origin:100% 50%;">20</span><span class="t" style="left:815.01px;top:560.00px;font-size:8.80px;line-height:11px;color:#605e5c;transform:scaleX(0.8479);transform-origin:100% 50%;">19</span><span class="t" style="left:856.15px;top:560.00px;font-size:8.80px;line-height:11px;color:#605e5c;transform:scaleX(0.8785);transform-origin:100% 50%;">95.00%</span><span class="t" style="left:713.60px;top:572.00px;font-size:7.60px;line-height:9px;color:#605e5c;transform:scaleX(0.9167);transform-origin:0 50%;">2023</span><span class="t" style="left:787.01px;top:573.00px;font-size:8.80px;line-height:11px;color:#605e5c;transform:scaleX(0.8479);transform-origin:100% 50%;">20</span><span class="t" style="left:815.01px;top:573.00px;font-size:8.80px;line-height:11px;color:#605e5c;transform:scaleX(0.8479);transform-origin:100% 50%;">10</span><span class="t" style="left:856.15px;top:573.00px;font-size:8.80px;line-height:11px;color:#605e5c;transform:scaleX(0.8785);transform-origin:100% 50%;">50.00%</span><span class="t" style="left:713.60px;top:585.00px;font-size:7.60px;line-height:9px;color:#605e5c;transform:scaleX(0.9167);transform-origin:0 50%;">2019</span><span class="t" style="left:787.01px;top:585.00px;font-size:8.80px;line-height:11px;color:#605e5c;transform:scaleX(0.8479);transform-origin:100% 50%;">15</span><span class="t" style="left:815.01px;top:585.00px;font-size:8.80px;line-height:11px;color:#605e5c;transform:scaleX(0.8479);transform-origin:100% 50%;">22</span><span class="t" style="left:851.26px;top:585.00px;font-size:8.80px;line-height:11px;color:#605e5c;transform:scaleX(0.8805);transform-origin:100% 50%;">146.67%</span><span class="t" style="left:707.90px;top:597.00px;font-size:7.50px;line-height:9px;color:#252423;font-weight:700;transform:scaleX(0.9793);transform-origin:0 50%;">Total</span><span class="t" style="left:782.12px;top:597.00px;font-size:8.80px;line-height:11px;color:#252423;font-weight:700;transform:scaleX(0.9194);transform-origin:100% 50%;">498</span><span class="t" style="left:810.12px;top:597.00px;font-size:8.80px;line-height:11px;color:#252423;font-weight:700;transform:scaleX(0.9194);transform-origin:100% 50%;">312</span><span class="t" style="left:856.15px;top:597.00px;font-size:8.80px;line-height:11px;color:#252423;font-weight:700;transform:scaleX(0.9348);transform-origin:100% 50%;">65.48%</span><span class="t" style="left:698.00px;top:283.00px;font-size:9.00px;line-height:11px;color:#252423;transform:scaleX(0.9680);transform-origin:0 50%;">Recruiter Name</span><span class="t" style="left:771.00px;top:283.00px;font-size:9.00px;line-height:11px;color:#252423;transform:scaleX(0.9594);transform-origin:0 50%;">Target</span><span class="t" style="left:802.80px;top:283.00px;font-size:9.00px;line-height:11px;color:#252423;transform:scaleX(0.9996);transform-origin:0 50%;">Hired</span><span class="t" style="left:830.60px;top:283.00px;font-size:9.00px;line-height:11px;color:#252423;transform:scaleX(0.9696);transform-origin:0 50%;">% Achieved</span></section>
</main>
<aside class="g" id="panes">
<div class="b" style="left:934.00px;top:78.00px;width:1.00px;height:568.00px;background:#a3a2a0;"></div>
<div class="b" style="left:935.00px;top:78.00px;width:32.00px;height:568.00px;background:#ffffff;"></div>
<div class="b" style="left:967.00px;top:78.00px;width:36.00px;height:578.00px;background:#f1f1f1;border-left:1px solid #e1dfdd"></div>
<div class="b" style="left:1002.50px;top:78.00px;width:181.00px;height:578.00px;background:#f1f1f1;border-left:1px solid #dddcdb"></div>
<div class="b" style="left:1183.00px;top:78.00px;width:181.00px;height:578.00px;background:#f1f1f1;border-left:1px solid #d2d0ce"></div>
<svg class="b" style="left:0.00px;top:0.00px;" width="1364" height="656" viewBox="0 0 1364 656"><path d="M951 91.6l-5.3 5.8l5.3 5.8M956.8 91.6l-5.3 5.8l5.3 5.8" fill="none" stroke="#3b3a39" stroke-width="1.35"/><path d="M984.7 91.6l-5.3 5.8l5.3 5.8M990.5 91.6l-5.3 5.8l5.3 5.8" fill="none" stroke="#3b3a39" stroke-width="1.35"/><path d="M958.6 119.900V131.100L952.900 127H947.600V124H952.900Z" fill="none" stroke="#252423" stroke-width="1.100" stroke-linejoin="round"/><path d="M1163 91.6l5.3 5.8l-5.3 5.8M1168.8 91.6l5.3 5.8l-5.3 5.8" fill="none" stroke="#3b3a39" stroke-width="1.35"/><path d="M1343.8 91.6l5.3 5.8l-5.3 5.8M1349.6 91.6l5.3 5.8l-5.3 5.8" fill="none" stroke="#3b3a39" stroke-width="1.35"/><path d="M1003 179.5h16.5l7.5-8 7.5 8h148.5" fill="none" stroke="#8a8886" stroke-width="1"/><line x1="1003" y1="386.5" x2="1183" y2="386.5" stroke="#d2d0ce" stroke-width="1"/><rect x="1011" y="135" width="32" height="32" rx="2" fill="#d9d9d9"/><path d="M1015 139.5h19" stroke="#3b3a39" stroke-width="1.2"/><rect x="1015.5" y="144.5" width="23.5" height="7.5" fill="#117865" stroke="#252423" stroke-width="1" stroke-dasharray="1.5 1.2"/><rect x="1015.5" y="155.5" width="23.5" height="7.5" fill="#117865" stroke="#252423" stroke-width="1" stroke-dasharray="1.5 1.2"/><path d="M1090 139.5h-8.5v23h9" fill="none" stroke="#252423" stroke-width="1.1"/><path d="M1090 139.5l7.5 6v2M1090 139.5v6.5h7" fill="none" stroke="#252423" stroke-width="1.1"/><path d="M1104 148l-9 11.5" stroke="#252423" stroke-width="2" stroke-linecap="round"/><path d="M1094.5 158q-2 0-3.5 2-1.5 2.500-4 2.500 5 1.5 8-1 1.500-1.500 1-3z" fill="#fff" stroke="#252423" stroke-width="1"/></svg><span class="t" style="left:951.9px;top:161.4px;font-size:14.8px;line-height:18px;color:#252423;transform:translate(-50%,-50%) rotate(90deg);-webkit-text-stroke:.3px #252423;letter-spacing:0.45px">Filters</span><span class="t" style="left:985px;top:150.8px;font-size:14.8px;line-height:18px;color:#252423;transform:translate(-50%,-50%) rotate(90deg);-webkit-text-stroke:.3px #252423;letter-spacing:0.7px">Selection</span><section id="visualizations" class="g"><span class="t" style="left:1011.40px;top:89.00px;font-size:14.70px;line-height:18px;color:#252423;letter-spacing:0.645px;-webkit-text-stroke:0.35px #252423;">Visualizations</span><span class="t" style="left:1011.40px;top:116.00px;font-size:11.70px;line-height:14px;color:#252423;letter-spacing:0.193px;-webkit-text-stroke:0.20px #252423;">Build visual</span><svg class="b" style="left:0.00px;top:0.00px;" width="1364" height="656" viewBox="0 0 1364 656"><g transform="translate(1014 191)"><path d="M0.5 0v17.5h17.5" fill="none" stroke="#3b3a39" stroke-width="1"/><rect x="1.5" y="2.5" width="5" height="4" fill="#fff" stroke="#3b3a39" stroke-width="1"/><rect x="6.5" y="2.5" width="6" height="4" fill="#83beec" stroke="#2b88d8" stroke-width="1"/><rect x="1.5" y="10.5" width="7" height="4" fill="#fff" stroke="#3b3a39" stroke-width="1"/><rect x="8.5" y="10.5" width="8" height="4" fill="#c8c6c4" stroke="#8a8886" stroke-width="1"/></g><g transform="translate(1042 191)"><path d="M0.5 0v17.5h17.5" fill="none" stroke="#3b3a39" stroke-width="1"/><rect x="3.5" y="11.5" width="4" height="6" fill="#fff" stroke="#3b3a39" stroke-width="1"/><rect x="3.5" y="5.5" width="4" height="6" fill="#83beec" stroke="#2b88d8" stroke-width="1"/><rect x="11.5" y="10.5" width="4" height="7" fill="#fff" stroke="#3b3a39" stroke-width="1"/><rect x="11.5" y="2.5" width="4" height="8" fill="#c8c6c4" stroke="#8a8886" stroke-width="1"/></g><g transform="translate(1070 191)"><path d="M0.5 0v17.5h17.5" fill="none" stroke="#3b3a39" stroke-width="1.6"/><rect x="1.5" y="0.5" width="16" height="3.5" fill="#83beec" stroke="#2b88d8" stroke-width="1"/><rect x="1.5" y="5" width="9" height="3" fill="#fff" stroke="#605e5c" stroke-width="1"/><rect x="1.5" y="9.5" width="6" height="3" fill="#c8c6c4" stroke="#605e5c" stroke-width="1"/><rect x="1.5" y="13.5" width="12" height="3" fill="#fff" stroke="#605e5c" stroke-width="1"/></g><g transform="translate(1098 191)"><path d="M0.5 0v17.5h17.5" fill="none" stroke="#3b3a39" stroke-width="1.6"/><rect x="1.5" y="0.5" width="4" height="17" fill="#83beec" stroke="#2b88d8" stroke-width="1"/><rect x="5.5" y="7.5" width="3" height="10" fill="#fff" stroke="#605e5c" stroke-width="1"/><rect x="9.5" y="9.5" width="3" height="8" fill="#c8c6c4" stroke="#605e5c" stroke-width="1"/><rect x="13.5" y="4.5" width="3.5" height="13" fill="#fff" stroke="#605e5c" stroke-width="1"/></g><g transform="translate(1126 191)"><path d="M0.5 0v17.5h17.5" fill="none" stroke="#3b3a39" stroke-width="1"/><rect x="1.5" y="2.5" width="3" height="4" fill="#fff" stroke="#3b3a39" stroke-width="1"/><rect x="4.5" y="2.5" width="12" height="4" fill="#83beec" stroke="#2b88d8" stroke-width="1"/><rect x="1.5" y="10.5" width="9" height="4" fill="#fff" stroke="#3b3a39" stroke-width="1"/><rect x="10.5" y="10.5" width="6" height="4" fill="#c8c6c4" stroke="#8a8886" stroke-width="1"/></g><g transform="translate(1154 191)"><path d="M0.5 0v17.5h17.5" fill="none" stroke="#3b3a39" stroke-width="1"/><rect x="3.5" y="13.5" width="4" height="4" fill="#fff" stroke="#3b3a39" stroke-width="1"/><rect x="3.5" y="2.5" width="4" height="11" fill="#83beec" stroke="#2b88d8" stroke-width="1"/><rect x="11.5" y="7.5" width="4" height="10" fill="#fff" stroke="#3b3a39" stroke-width="1"/><rect x="11.5" y="2.5" width="4" height="5" fill="#c8c6c4" stroke="#8a8886" stroke-width="1"/></g><g transform="translate(1014 219)"><path d="M0.5 0v17.5h17.5" fill="none" stroke="#3b3a39" stroke-width="1"/><path d="M1 14l6-7.5 5 5.500 6-6" fill="none" stroke="#3b3a39" stroke-width="1.1"/><path d="M1 17l11-12 6 7" fill="none" stroke="#2b88d8" stroke-width="1.1"/></g><g transform="translate(1042 219)"><path d="M13.500 1l4 7v9.500h-6z" fill="#c8c6c4" stroke="#a19f9d" stroke-width=".8"/><path d="M0.500 17.500v-7l6-9 5.500 8" fill="#fff" stroke="#3b3a39" stroke-width="1"/><path d="M0.500 17.500v-6.500l4.500 3.500 6.500-8 6 11z" fill="#83beec" stroke="#2b88d8" stroke-width="1"/></g><g transform="translate(1070 219)"><path d="M0.5 0v17.5h17.5" fill="none" stroke="#3b3a39" stroke-width="1"/><path d="M1 4.500l5.500 6 7-8.500 4.500 3.500v8l-4.500-4-7 6-5.500-5.500z" fill="#83beec" stroke="#2b88d8" stroke-width="1"/></g><g transform="translate(1098 219)"><path d="M0.5 0v17.5h17.5" fill="none" stroke="#3b3a39" stroke-width="1"/><rect x="3.5" y="2.5" width="4" height="11" fill="#83beec" stroke="#2b88d8" stroke-width="1"/><rect x="3.5" y="13.5" width="4" height="4" fill="#fff" stroke="#3b3a39" stroke-width="1"/><rect x="11.5" y="2.5" width="4" height="5" fill="#c8c6c4" stroke="#8a8886" stroke-width="1"/><rect x="11.5" y="7.5" width="4" height="10" fill="#fff" stroke="#3b3a39" stroke-width="1"/><path d="M1 16.500l5.500-6.500 5 5.500 6.500-8" fill="none" stroke="#3b3a39" stroke-width="1.1"/></g><g transform="translate(1126 219)"><path d="M0.5 0v17.5h17.5" fill="none" stroke="#3b3a39" stroke-width="1"/><rect x="3.5" y="8.5" width="4" height="9" fill="#83beec" stroke="#2b88d8" stroke-width="1"/><rect x="8.5" y="2.5" width="4" height="15" fill="#fff" stroke="#3b3a39" stroke-width="1"/><rect x="13.5" y="6.5" width="3.5" height="11" fill="#c8c6c4" stroke="#8a8886" stroke-width="1"/><path d="M1 16.500l5.500-6.500 5 5.500 6.500-8" fill="none" stroke="#3b3a39" stroke-width="1.1"/></g><g transform="translate(1154 219)"><path d="M0.5 0v17.5h17.5" fill="none" stroke="#3b3a39" stroke-width="1"/><rect x="2.5" y="11" width="3.5" height="3.5" fill="#e8912d"/><rect x="13.5" y="11" width="3.5" height="3.5" fill="#e8912d"/><path d="M2 3.500q4 0 7 3 3-3 8-3.500v4q-5 .5-8 4-3-3.500-7-3.500z" fill="#8a8886"/><path d="M2 8q4 0 7 3.500 3-3.500 8-4v4q-5 .500-8 4-3-3.500-7-3.500z" fill="#2b88d8"/><circle cx="9.500" cy="10.500" r="1.500" fill="#f0a848"/></g><g transform="translate(1014 247)"><path d="M0.5 0v17.5h17.5" fill="none" stroke="#3b3a39" stroke-width="1"/><path d="M2.500 17V2.500h3V17M6.500 17V7.500h3.500V17M10.500 7.500V2.500h3M13.500 2.500h3V17" fill="none" stroke="#3b3a39" stroke-width="1"/><rect x="10" y="2" width="3.5" height="8" fill="#2b88d8"/></g><g transform="translate(1042 247)"><rect x="0.5" y="1.5" width="17" height="4.5" fill="#83beec" stroke="#2b88d8" stroke-width="1"/><rect x="2.5" y="6" width="13" height="4.5" fill="#83beec" stroke="#2b88d8" stroke-width="1"/><rect x="5.5" y="10.5" width="7" height="5.5" fill="#83beec" stroke="#2b88d8" stroke-width="1"/></g><g transform="translate(1070 247)"><path d="M0.5 0v17.5h17.5" fill="none" stroke="#3b3a39" stroke-width="1"/><rect x="12" y="1" width="3" height="3" fill="#3b3a39"/><rect x="3" y="4" width="3" height="3" fill="#83beec"/><rect x="8" y="7" width="3" height="3" fill="#83beec"/><rect x="3" y="12" width="3" height="3" fill="#3b3a39"/><rect x="13" y="10" width="3" height="3" fill="#83beec"/></g><g transform="translate(1098 247)"><circle cx="9" cy="9" r="8.5" fill="#fff" stroke="#3b3a39" stroke-width="1"/><path d="M9 9V0.5A8.5 8.5 0 0 1 14.5 15.5z" fill="#83beec" stroke="#2b88d8" stroke-width="1"/></g><g transform="translate(1126 247)"><circle cx="9" cy="9" r="6.2" fill="none" stroke="#83beec" stroke-width="4.6"/><circle cx="9" cy="9" r="8.5" fill="none" stroke="#2b88d8" stroke-width="1"/><circle cx="9" cy="9" r="3.9" fill="none" stroke="#2b88d8" stroke-width="1"/><path d="M3 3.2A8.5 8.5 0 0 1 9 .5V5A4 4 0 0 0 6 6.2z" fill="#fff" stroke="#8a8886" stroke-width=".8"/></g><g transform="translate(1154 247)"><rect x="0.5" y="0.5" width="8" height="8" fill="#83beec" stroke="#2b88d8" stroke-width="1"/><rect x="0.5" y="8.5" width="8" height="9" fill="#83beec" stroke="#2b88d8" stroke-width="1"/><rect x="8.5" y="0.5" width="9" height="5" fill="#fff" stroke="#3b3a39" stroke-width="1"/><rect x="8.5" y="5.5" width="5" height="6" fill="#fff" stroke="#3b3a39" stroke-width="1"/><rect x="13.5" y="5.5" width="4" height="6" fill="#fff" stroke="#3b3a39" stroke-width="1"/><rect x="8.5" y="11.5" width="5" height="6" fill="#fff" stroke="#3b3a39" stroke-width="1"/><rect x="13.5" y="11.5" width="4" height="6" fill="#fff" stroke="#3b3a39" stroke-width="1"/></g><g transform="translate(1014 275)"><circle cx="9.500" cy="8" r="5.800" fill="#fff" stroke="#3b3a39" stroke-width="1.1"/><path d="M6.500 4.500q2-1.500 3.500-.500l-.500 2.500-2 .500zM10.500 8.500l3 .500-.500 2.500-2.500 1zM5.500 9l2.500 1-.500 2.500z" fill="#2f9e44" stroke="#2f9e44" stroke-width=".6"/><path d="M5 1.500A8 8 0 0 0 6 15M5 17.500h9M9.500 14v3.500" fill="none" stroke="#3b3a39" stroke-width="1"/></g><g transform="translate(1042 275)"><path d="M1 2h6l1 2 3-1 1-2h5v6l-2 4-5 6-5-1-3-5z" fill="#c8c6c4" stroke="#605e5c" stroke-width="1"/><path d="M2 3h5l2 5-4 3-3-2zM11 9h6l-2 5-4 2z" fill="#4b9be0" stroke="#1f6fb5" stroke-width=".8"/></g><g transform="translate(1070 275)"><path d="M1 2h6l1 2 3-1 1-2h5v6l-2 4-5 6-5-1-3-5z" fill="#fff" stroke="#2b88d8" stroke-width="1.1"/><path d="M2 8h6l1-5M9 16l2-6h6" fill="none" stroke="#2b88d8" stroke-width="1"/></g><g transform="translate(1098 275)"><path d="M12.200 -.300L1.600 16.300L10.400 11.900L17 18.100z" fill="#4a9fdc"/><path d="M12.200 -.300L10.400 11.900L17 18.100z" fill="#2b80c8"/></g><g transform="translate(1126 275)"><path d="M1 13A8 8 0 0 1 17 13h-3.5A4.5 4.5 0 0 0 4.5 13z" fill="#fff" stroke="#3b3a39" stroke-width="1"/><path d="M9 5A8 8 0 0 1 17 13h-3.5A4.5 4.5 0 0 0 9 8.5z" fill="#2b88d8"/><path d="M8 14l5-5" stroke="#3b3a39" stroke-width="1.6"/></g><g transform="translate(1154 275)"><rect x="0.5" y="2.5" width="17" height="13" fill="#fff" stroke="#3b3a39" stroke-width="1"/><text x="9" y="11" font-size="8" font-family="Liberation Sans,sans-serif" fill="#2b88d8" text-anchor="middle" textLength="14" lengthAdjust="spacingAndGlyphs">123</text><path d="M2.5 13h13" stroke="#2b88d8" stroke-width="1"/></g><g transform="translate(1014 303)"><rect x="0.5" y="0.5" width="17" height="17" fill="#fff" stroke="#3b3a39" stroke-width="1"/><path d="M3.500 3v12" stroke="#605e5c" stroke-width="1"/><path d="M5.500 5.500h9M5.500 9h6M5.500 12.500h9" stroke="#1f6fb5" stroke-width="1.6"/></g><g transform="translate(1042 303)"><rect x="0.5" y="1.5" width="17" height="14" fill="#fff" stroke="#3b3a39" stroke-width="1"/><path d="M3 10l3-5 3 5z" fill="#6cc070" stroke="#2f9e44" stroke-width=".8"/><path d="M10 5h6l-3 5z" fill="#f06060" stroke="#d13438" stroke-width=".8"/><path d="M3 13h12" stroke="#8a8886" stroke-width="1"/></g><g transform="translate(1070 303)"><rect x="0.5" y="0.5" width="17" height="17" fill="#fff" stroke="#3b3a39" stroke-width="1"/><rect x="0.5" y="0.5" width="17" height="2" fill="#c8c6c4" stroke="#3b3a39" stroke-width="1"/><rect x="3.5" y="6.5" width="3" height="3" fill="#c8c6c4" stroke="#605e5c" stroke-width="1"/><rect x="3.5" y="11.5" width="3" height="3" fill="#c8c6c4" stroke="#605e5c" stroke-width="1"/><path d="M9 8h9l-3.5 4v5.5h-2.5V12z" fill="#fff" stroke="#3b3a39" stroke-width="1"/></g><g transform="translate(1098 303)"><rect x="0.5" y="0.5" width="17" height="17" fill="#fff" stroke="#3b3a39" stroke-width="1"/><rect x="0.5" y="0.5" width="17" height="2" fill="#c8c6c4" stroke="#3b3a39" stroke-width="1"/><path d="M0.5 7.5h17M0.5 12.5h17M6.500 2.5v15M11.500 2.5v15" stroke="#3b3a39" stroke-width="1"/></g><g transform="translate(1126 303)"><rect x="0.5" y="0.5" width="17" height="17" fill="#fff" stroke="#3b3a39" stroke-width="1"/><rect x="0.5" y="0.5" width="17" height="2" fill="#c8c6c4" stroke="#3b3a39" stroke-width="1"/><rect x="11.5" y="2.5" width="6" height="15" fill="#83beec"/><rect x="0.5" y="12.5" width="17" height="5" fill="#83beec"/><path d="M0.5 7.5h17M0.5 12.5h17M6.500 2.5v15M11.500 2.5v15" stroke="#3b3a39" stroke-width="1"/></g><g transform="translate(1154 303)"><text x="9" y="14" font-size="15.5" font-weight="700" font-family="Liberation Sans,sans-serif" fill="#2b7fd0" text-anchor="middle" textLength="9.6" lengthAdjust="spacingAndGlyphs">R</text></g><g transform="translate(1014 331)"><text x="9" y="14" font-size="14.5" font-weight="700" font-family="Liberation Sans,sans-serif" fill="#2b7fd0" text-anchor="middle" textLength="19" lengthAdjust="spacingAndGlyphs">Py</text></g><g transform="translate(1042 331)"><path d="M0.5 0v17.5h17.5" fill="none" stroke="#3b3a39" stroke-width="1"/><path d="M1 4h12" stroke="#2b88d8" stroke-width="1.2"/><circle cx="15" cy="4" r="2.2" fill="#83beec" stroke="#2b88d8"/><path d="M1 9h8M1 13h4" stroke="#605e5c" stroke-width="1"/><rect x="9.5" y="8" width="2" height="2" fill="#c8c6c4" stroke="#605e5c" stroke-width="1"/><rect x="5.5" y="12" width="2" height="2" fill="#c8c6c4" stroke="#605e5c" stroke-width="1"/></g><g transform="translate(1070 331)"><rect x="0.5" y="6.5" width="6" height="4.5" fill="#83beec" stroke="#2b88d8" stroke-width="1"/><rect x="11.5" y="0.5" width="6" height="4.5" fill="#83beec" stroke="#2b88d8" stroke-width="1"/><rect x="11.5" y="6.5" width="6" height="4.5" fill="#83beec" stroke="#2b88d8" stroke-width="1"/><rect x="11.5" y="12.5" width="6" height="4.5" fill="#83beec" stroke="#2b88d8" stroke-width="1"/><path d="M6.5 9h5M9 3v12M9 3h2.5M9 15h2.5" fill="none" stroke="#3b3a39" stroke-width="1"/></g><g transform="translate(1098 331)"><path d="M0.5 1.5h17v11h-10l-3.5 4v-4h-3.5z" fill="#fff" stroke="#2b88d8" stroke-width="1.2"/></g><g transform="translate(1126 331)"><path d="M2.5 0.5h8l4.5 4.5v12.5h-12.5z" fill="#fff" stroke="#3b3a39" stroke-width="1"/><path d="M10.5 0.5v4.5h4.5" fill="none" stroke="#3b3a39" stroke-width="1"/><rect x="1.5" y="5.5" width="3" height="3" fill="#83beec" stroke="#2b88d8" stroke-width="1"/><path d="M6 7h6M5 11h7" stroke="#2b88d8" stroke-width="1.2"/></g><g transform="translate(1154 331)"><path d="M4 1h10v6a5 5 0 0 1-10 0zM4 3H1v2a3 3 0 0 0 3 3M14 3h3v2a3 3 0 0 1-3 3M9 12v3" fill="#fff" stroke="#3b3a39" stroke-width="1.1"/><path d="M4 1h10v2.2H4z" fill="#83beec" stroke="#2b88d8" stroke-width=".8"/><rect x="5.5" y="15.5" width="8" height="2" fill="#83beec" stroke="#2b88d8" stroke-width="1"/></g><g transform="translate(1014 359)"><path d="M2 0.5h9l5 5v12h-14z" fill="#fff" stroke="#3b3a39" stroke-width="1.2"/><path d="M11 0.5v5h5" fill="none" stroke="#3b3a39" stroke-width="1"/><rect x="4.5" y="11" width="2.2" height="5" fill="#3b3a39"/><rect x="8" y="9" width="2.2" height="7" fill="#3b3a39"/><rect x="11.5" y="12" width="2.2" height="4" fill="#3b3a39"/></g><g transform="translate(1042 359)"><rect x="1.5" y="4.5" width="16" height="12" fill="#fff" stroke="#3b3a39" stroke-width="1"/><text x="10" y="13.5" font-size="8" font-family="Liberation Sans,sans-serif" fill="#2b88d8" text-anchor="middle" textLength="12" lengthAdjust="spacingAndGlyphs">123</text><path d="M2 0h7l-2.5 4h3l-6 7 1.5-5h-3z" fill="#f39a2b" stroke="#d8730c" stroke-width=".5"/></g><g transform="translate(1070 359)"><rect x="1.5" y="2.5" width="15" height="15" fill="#fff" stroke="#2b88d8" stroke-width="1"/><path d="M6 5h9v4l-5 2v5H4z" fill="#83beec" stroke="#2b88d8" stroke-width="1"/><path d="M1 0h4v5l-2 2.5-2-2.5z" fill="#e0730c"/><circle cx="15.5" cy="15.5" r="2.6" fill="#e0730c"/><rect x="15" y="9" width="2.5" height="2.5" fill="#e0730c"/></g><g transform="translate(1098 359)"><g fill="none" stroke="#9b3fb5" stroke-width="1.2" stroke-linejoin="round"><path d="M9 0.8l8 8.2-8 8.2-8-8.2z"/><path d="M5 5l8 8M13 5l-8 8"/></g></g><g transform="translate(1126 359)"><g fill="#fff" stroke="#2b88d8" stroke-width="1.2" stroke-linejoin="round"><path d="M1 1h10l6.5 8-6.5 8H1l6.5-8z"/><path d="M7 13l5-6M4 17l4-5"/></g></g><g transform="translate(1154 359)"><circle cx="3" cy="8.300" r="1" fill="#3b3a39"/><circle cx="9" cy="8.300" r="1" fill="#3b3a39"/><circle cx="15" cy="8.300" r="1" fill="#3b3a39"/></g></svg><span class="t" style="left:1015.30px;top:397.00px;font-size:12.20px;line-height:15px;color:#252423;transform:scaleX(0.9121);transform-origin:0 50%;">Values</span><div class="b" style="left:1007.30px;top:418.00px;width:169.50px;height:26.50px;background:#fff;border:1px dashed #c8c6c4;border-radius:2px"></div><span class="t" style="left:1018.20px;top:425.00px;font-size:12.20px;line-height:15px;color:#252423;transform:scaleX(0.9768);transform-origin:0 50%;">Add data fields here</span><span class="t" style="left:1015.30px;top:457.00px;font-size:12.20px;line-height:15px;color:#252423;letter-spacing:0.269px;-webkit-text-stroke:0.30px #252423;">Drill through</span><span class="t" style="left:1015.30px;top:482.00px;font-size:12.20px;line-height:15px;color:#252423;transform:scaleX(0.9676);transform-origin:0 50%;">Cross-report</span><span class="b" style="left:1129.2px;top:481.6px;width:32px;height:15px;border-radius:7.5px;background:#fff;border:1px solid #605e5c"></span><span class="b" style="left:1134.2px;top:485.1px;width:8px;height:8px;border-radius:50%;background:#605e5c"></span><span class="t" style="left:1144.00px;top:485.00px;font-size:8.60px;line-height:10px;color:#3b3a39;letter-spacing:0.594px;">Off</span><span class="t" style="left:1015.30px;top:509.00px;font-size:12.20px;line-height:15px;color:#252423;transform:scaleX(0.9553);transform-origin:0 50%;">Keep all filters</span><span class="b" style="left:1129.2px;top:508.4px;width:32px;height:15px;border-radius:7.5px;background:#117865"></span><span class="t" style="left:1134.00px;top:511.00px;font-size:8.60px;line-height:10px;color:#fff;letter-spacing:0.028px;-webkit-text-stroke:0.20px #fff;">On</span><span class="b" style="left:1148.5px;top:511.6px;width:8px;height:8px;border-radius:50%;background:#fff"></span><div class="b" style="left:1007.30px;top:534.40px;width:169.50px;height:25.50px;background:#fff;border:1px dashed #c8c6c4;border-radius:2px"></div><span class="t" style="left:1016.50px;top:541.00px;font-size:12.20px;line-height:15px;color:#252423;letter-spacing:0.021px;">Add drill-through fields here</span></section><section id="data" class="g"><span class="t" style="left:1192.40px;top:89.00px;font-size:14.70px;line-height:18px;color:#252423;letter-spacing:0.716px;-webkit-text-stroke:0.35px #252423;">Data</span><div class="b" style="left:1188.00px;top:123.00px;width:172.00px;height:26.50px;background:#fff;border:1px solid #605e5c;border-radius:2px"></div><span class="t" style="left:1217.20px;top:130.00px;font-size:13.20px;line-height:16px;color:#3b3a39;transform:scaleX(0.9803);transform-origin:0 50%;">Search</span><div class="b" style="left:1352.20px;top:158.30px;width:7.80px;height:256.50px;background:#c8c8c8;"></div><svg class="b" style="left:0.00px;top:0.00px;" width="1364" height="656" viewBox="0 0 1364 656"><circle cx="1205.500" cy="134.500" r="4.300" fill="none" stroke="#252423" stroke-width="1.100"/><path d="M1202.300 138l-5 5.500" stroke="#252423" stroke-width="1.100"/><path d="M1194.3 166.5l5.500 5.500-5.500 5.500" fill="none" stroke="#605e5c" stroke-width="1"/><g transform="translate(1206 164)" fill="none" stroke="#3b3a39" stroke-width="1"><path d="M11.5 5V0.5H0.5V9.5h6"/><path d="M0.5 3.5h11M0.5 6.5h6M4.5 3.5v6"/><rect x="7.5" y="6.5" width="7" height="9" fill="#f1f1f1"/><path d="M9.5 8.5h3" /><path d="M9.5 11h1M11.500 11h1M9.5 13h1M11.500 13h1" stroke-width="0.9"/></g><path d="M1191.5 193.275l5.500 5.500 5.500-5.500" fill="none" stroke="#605e5c" stroke-width="1"/><g transform="translate(1206 190)" fill="none" stroke="#3b3a39" stroke-width="1"><rect x="0.5" y="0.5" width="13" height="11"/><path d="M0.5 3.5h13M0.5 6.5h13M0.5 9h13M4.5 3.5v8M9.5 3.5v8"/></g><rect x="1222.500" y="213.5" width="11" height="11" rx="2" fill="#fff" stroke="#8a8886" stroke-width="1"/><g transform="translate(1241 214)" fill="none" stroke="#3b3a39" stroke-width="1"><path d="M12.500 6.500V0.500H0.500V11.500h8"/><path d="M0.500 3.500h12M0.500 6.500h9M0.500 9h8M4.500 3.500v8"/><text x="9" y="13.5" font-size="9" font-family="Liberation Sans,sans-serif" fill="#252423" stroke="none">Σ</text></g><rect x="1222.500" y="237.5" width="11" height="11" rx="2" fill="#fff" stroke="#8a8886" stroke-width="1"/><g transform="translate(1241 238)" fill="none" stroke="#3b3a39" stroke-width="1"><path d="M12.500 6.500V0.500H0.500V11.500h8"/><path d="M0.500 3.500h12M0.500 6.500h9M0.500 9h8M4.500 3.500v8"/><text x="8.8" y="13" font-size="8.5" font-style="italic" font-family="Liberation Serif,serif" fill="#605e5c" stroke="none">fx</text></g><rect x="1222.500" y="261.5" width="11" height="11" rx="2" fill="#fff" stroke="#8a8886" stroke-width="1"/><rect x="1222.500" y="285.5" width="11" height="11" rx="2" fill="#fff" stroke="#8a8886" stroke-width="1"/><rect x="1222.500" y="309.5" width="11" height="11" rx="2" fill="#fff" stroke="#8a8886" stroke-width="1"/><g transform="translate(1240 308)" fill="none" stroke="#252423" stroke-width="1"><circle cx="8" cy="8" r="7.500"/><ellipse cx="8" cy="8" rx="3.200" ry="7.500"/><path d="M0.500 8h15M1.700 4.500h12.600M1.700 11.500h12.600"/></g><rect x="1222.500" y="333.5" width="11" height="11" rx="2" fill="#fff" stroke="#8a8886" stroke-width="1"/><path d="M1208.8 334.325l5.500 5.500-5.500 5.500" fill="none" stroke="#605e5c" stroke-width="1"/><g transform="translate(1241 334)" fill="none" stroke="#3b3a39" stroke-width="1"><path d="M12.500 6.500V0.500H0.500V11.500h8"/><path d="M0.500 3.500h12M0.500 6.500h9M0.500 9h8M4.500 3.500v8"/><text x="8.8" y="13" font-size="8.5" font-style="italic" font-family="Liberation Serif,serif" fill="#605e5c" stroke="none">fx</text></g><rect x="1222.500" y="357.5" width="11" height="11" rx="2" fill="#fff" stroke="#8a8886" stroke-width="1"/><g transform="translate(1241 358)" fill="none" stroke="#3b3a39" stroke-width="1"><path d="M12.500 6.500V0.500H0.500V11.500h8"/><path d="M0.500 3.500h12M0.500 6.500h9M0.500 9h8M4.500 3.500v8"/><text x="8.8" y="13" font-size="8.5" font-style="italic" font-family="Liberation Serif,serif" fill="#605e5c" stroke="none">fx</text></g><rect x="1222.500" y="381.5" width="11" height="11" rx="2" fill="#fff" stroke="#8a8886" stroke-width="1"/><g transform="translate(1241 381)" fill="none" stroke="#3b3a39" stroke-width="1"><path d="M12.500 6.500V0.500H0.500V11.500h8"/><path d="M0.500 3.500h12M0.500 6.500h9M0.500 9h8M4.500 3.500v8"/><text x="8.8" y="13" font-size="8.5" font-style="italic" font-family="Liberation Serif,serif" fill="#605e5c" stroke="none">fx</text></g><rect x="1222.500" y="405.5" width="11" height="11" rx="2" fill="#fff" stroke="#8a8886" stroke-width="1"/><rect x="1222.500" y="429.5" width="11" height="11" rx="2" fill="#fff" stroke="#8a8886" stroke-width="1"/><rect x="1222.500" y="453.5" width="11" height="11" rx="2" fill="#fff" stroke="#8a8886" stroke-width="1"/><rect x="1222.500" y="477.5" width="11" height="11" rx="2" fill="#fff" stroke="#8a8886" stroke-width="1"/><g transform="translate(1241 477)" fill="none" stroke="#3b3a39" stroke-width="1"><path d="M12.500 6.500V0.500H0.500V11.500h8"/><path d="M0.500 3.500h12M0.500 6.500h9M0.500 9h8M4.500 3.500v8"/><text x="8.8" y="13" font-size="8.5" font-style="italic" font-family="Liberation Serif,serif" fill="#605e5c" stroke="none">fx</text></g><rect x="1222.500" y="501.5" width="11" height="11" rx="2" fill="#fff" stroke="#8a8886" stroke-width="1"/><g transform="translate(1241 501)" fill="none" stroke="#3b3a39" stroke-width="1"><path d="M12.500 6.500V0.500H0.500V11.500h8"/><path d="M0.500 3.500h12M0.500 6.500h9M0.500 9h8M4.500 3.500v8"/><text x="8.8" y="13" font-size="8.5" font-style="italic" font-family="Liberation Serif,serif" fill="#605e5c" stroke="none">fx</text></g><path d="M1194.3 526.125l5.500 5.500-5.500 5.500" fill="none" stroke="#605e5c" stroke-width="1"/><g transform="translate(1206 526)" fill="none" stroke="#3b3a39" stroke-width="1"><rect x="0.5" y="0.5" width="13" height="11"/><path d="M0.5 3.5h13M0.5 6.5h13M0.5 9h13M4.5 3.5v8M9.5 3.5v8"/></g><path d="M1191.5 552.9l5.500 5.500 5.500-5.500" fill="none" stroke="#605e5c" stroke-width="1"/><g transform="translate(1206 547)" fill="none" stroke="#3b3a39" stroke-width="1"><path d="M11.5 5V0.5H0.5V9.5h6"/><path d="M0.5 3.5h11M0.5 6.5h6M4.5 3.5v6"/><rect x="7.5" y="6.5" width="7" height="9" fill="#f1f1f1"/><path d="M9.5 8.5h3" /><path d="M9.5 11h1M11.500 11h1M9.5 13h1M11.500 13h1" stroke-width="0.9"/></g><rect x="1222.500" y="573.5" width="11" height="11" rx="2" fill="#fff" stroke="#8a8886" stroke-width="1"/><g transform="translate(1242 572)" fill="none" stroke="#3b3a39" stroke-width="1"><rect x="0.500" y="0.500" width="10" height="15" rx="0.500"/><rect x="2.500" y="2.500" width="6" height="3" stroke-width="0.9"/><path d="M2.500 8.500h1M5 8.500h1M7.500 8.500h1M2.500 10.500h1M5 10.500h1M7.500 10.500h1M2.500 12.500h1M5 12.500h1M7.500 12.500h1" stroke-width="0.9"/></g><rect x="1222.500" y="597.5" width="11" height="11" rx="2" fill="#fff" stroke="#8a8886" stroke-width="1"/><g transform="translate(1242 596)" fill="none" stroke="#3b3a39" stroke-width="1"><rect x="0.500" y="0.500" width="10" height="15" rx="0.500"/><rect x="2.500" y="2.500" width="6" height="3" stroke-width="0.9"/><path d="M2.500 8.500h1M5 8.500h1M7.500 8.500h1M2.500 10.500h1M5 10.500h1M7.500 10.500h1M2.500 12.500h1M5 12.500h1M7.500 12.500h1" stroke-width="0.9"/></g><rect x="1222.500" y="621.5" width="11" height="11" rx="2" fill="#fff" stroke="#8a8886" stroke-width="1"/><g transform="translate(1242 620)" fill="none" stroke="#3b3a39" stroke-width="1"><rect x="0.500" y="0.500" width="10" height="15" rx="0.500"/><rect x="2.500" y="2.500" width="6" height="3" stroke-width="0.9"/><path d="M2.500 8.500h1M5 8.500h1M7.500 8.500h1M2.500 10.500h1M5 10.500h1M7.500 10.500h1M2.500 12.500h1M5 12.500h1M7.500 12.500h1" stroke-width="0.9"/></g><rect x="1222.500" y="645.5" width="11" height="11" rx="2" fill="#fff" stroke="#8a8886" stroke-width="1"/><text x="1241.500" y="656.00" font-size="17" font-family="Liberation Sans,sans-serif" fill="#3b3a39" transform="translate(1241.5 0) scale(0.9 1) translate(-1241.5 0)">Σ</text></svg><span class="t" style="left:1225.10px;top:165.00px;font-size:12.20px;line-height:15px;color:#3b3a39;transform:scaleX(0.9372);transform-origin:0 50%;">Calendar</span><span class="t" style="left:1225.10px;top:189.00px;font-size:12.20px;line-height:15px;color:#3b3a39;transform:scaleX(0.9657);transform-origin:0 50%;">Candidate Details</span><span class="t" style="left:1260.00px;top:213.00px;font-size:12.20px;line-height:15px;color:#3b3a39;transform:scaleX(0.9674);transform-origin:0 50%;">Age</span><span class="t" style="left:1260.00px;top:237.00px;font-size:12.20px;line-height:15px;color:#3b3a39;transform:scaleX(0.9500);transform-origin:0 50%;">Age Range</span><span class="t" style="left:1260.00px;top:261.00px;font-size:12.20px;line-height:15px;color:#3b3a39;transform:scaleX(0.9684);transform-origin:0 50%;">Candidate Id</span><span class="t" style="left:1260.00px;top:285.00px;font-size:12.20px;line-height:15px;color:#3b3a39;transform:scaleX(0.9721);transform-origin:0 50%;">Candidate Name</span><span class="t" style="left:1260.00px;top:309.00px;font-size:12.20px;line-height:15px;color:#3b3a39;transform:scaleX(0.9519);transform-origin:0 50%;">City</span><span class="t" style="left:1260.00px;top:333.00px;font-size:12.20px;line-height:15px;color:#3b3a39;transform:scaleX(0.9728);transform-origin:0 50%;">DateOfBirth</span><span class="t" style="left:1260.00px;top:357.00px;font-size:12.20px;line-height:15px;color:#3b3a39;transform:scaleX(0.9583);transform-origin:0 50%;">Education</span><span class="t" style="left:1260.00px;top:381.00px;font-size:12.20px;line-height:15px;color:#3b3a39;transform:scaleX(0.9178);transform-origin:0 50%;">Email</span><span class="t" style="left:1260.00px;top:405.00px;font-size:12.20px;line-height:15px;color:#3b3a39;transform:scaleX(0.9388);transform-origin:0 50%;">First Name</span><span class="t" style="left:1260.00px;top:429.00px;font-size:12.20px;line-height:15px;color:#3b3a39;transform:scaleX(0.9584);transform-origin:0 50%;">Gender</span><span class="t" style="left:1260.00px;top:453.00px;font-size:12.20px;line-height:15px;color:#3b3a39;transform:scaleX(0.9323);transform-origin:0 50%;">Last Name</span><span class="t" style="left:1260.00px;top:477.00px;font-size:12.20px;line-height:15px;color:#3b3a39;transform:scaleX(0.9654);transform-origin:0 50%;">Marital Status</span><span class="t" style="left:1260.00px;top:501.00px;font-size:12.20px;line-height:15px;color:#3b3a39;transform:scaleX(0.9127);transform-origin:0 50%;">State</span><span class="t" style="left:1225.10px;top:525.00px;font-size:12.20px;line-height:15px;color:#3b3a39;transform:scaleX(0.9089);transform-origin:0 50%;">CV Sourcs</span><span class="t" style="left:1225.10px;top:549.00px;font-size:12.20px;line-height:15px;color:#3b3a39;transform:scaleX(0.9762);transform-origin:0 50%;">Matrices</span><span class="t" style="left:1260.00px;top:573.00px;font-size:12.20px;line-height:15px;color:#3b3a39;transform:scaleX(0.9871);transform-origin:0 50%;">% Attrition Rate</span><span class="t" style="left:1260.00px;top:597.00px;font-size:12.20px;line-height:15px;color:#3b3a39;transform:scaleX(0.9526);transform-origin:0 50%;">% Target Achei...</span><span class="t" style="left:1260.00px;top:621.00px;font-size:12.20px;line-height:15px;color:#3b3a39;letter-spacing:0.205px;">Attrition</span><span class="t" style="left:1260.00px;top:645.00px;font-size:12.20px;line-height:15px;color:#3b3a39;transform:scaleX(0.9753);transform-origin:0 50%;">Column</span></section>
</aside>
</body></html>
